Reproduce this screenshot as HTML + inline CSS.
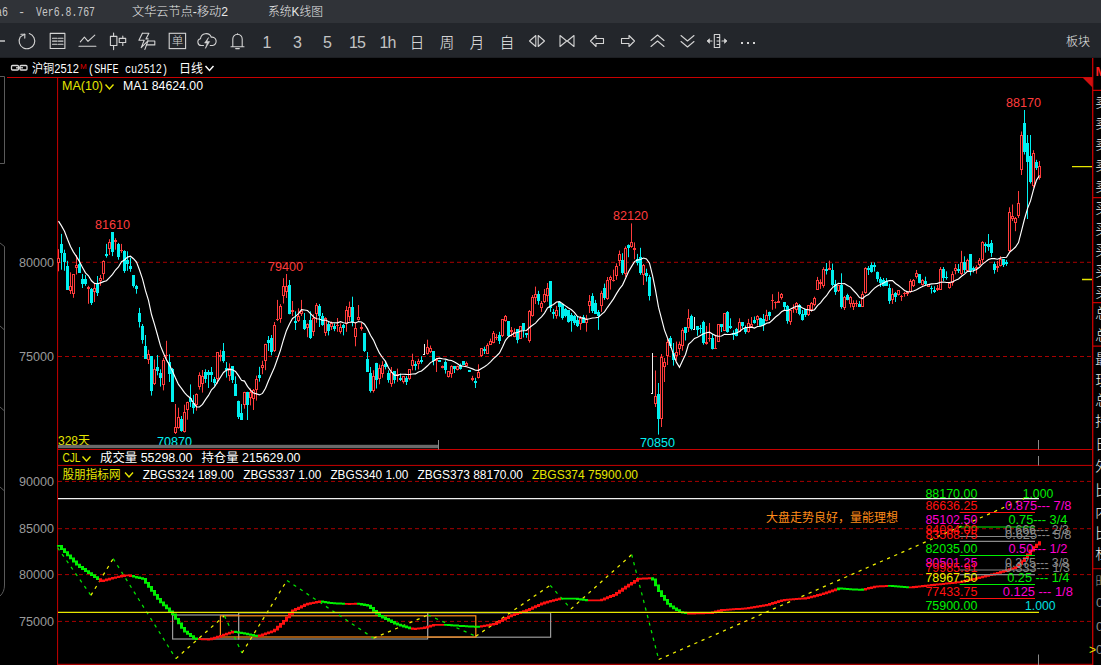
<!DOCTYPE html>
<html lang="zh"><head><meta charset="utf-8"><title>系统K线图</title>
<style>html,body{margin:0;padding:0;background:#000;overflow:hidden}body{width:1101px;height:665px}svg text{white-space:pre}</style></head>
<body><svg width="1101" height="665" viewBox="0 0 1101 665" font-family="Liberation Sans, Noto Sans CJK SC, sans-serif" style="display:block"><rect x="0" y="0" width="1101" height="665" fill="#000"/>
<rect x="0" y="0" width="1101" height="23" fill="#303338"/>
<rect x="0" y="23" width="1101" height="34.8" fill="#23262b"/>
<text x="-4" y="15.5" fill="#c8c8c8" font-size="12" text-anchor="start" textLength="12" lengthAdjust="spacingAndGlyphs" font-family="Liberation Mono, Noto Sans CJK SC, monospace">a6</text>
<text x="18" y="15.5" fill="#c8c8c8" font-size="12" text-anchor="start" font-family="Liberation Mono, Noto Sans CJK SC, monospace">-</text>
<text x="36" y="15.5" fill="#c8c8c8" font-size="12" text-anchor="start" textLength="59" lengthAdjust="spacingAndGlyphs" font-family="Liberation Mono, Noto Sans CJK SC, monospace">Ver6.8.767</text>
<text x="132" y="15.5" fill="#e8e8e8" font-size="12" text-anchor="start" textLength="96" lengthAdjust="spacingAndGlyphs" font-weight="300">文华云节点-移动2</text>
<text x="268" y="15.5" fill="#e8e8e8" font-size="12" text-anchor="start" textLength="55" lengthAdjust="spacingAndGlyphs" font-weight="300">系统K线图</text>
<text x="1066" y="45.8" fill="#e8e8e8" font-size="12" text-anchor="start" textLength="24" lengthAdjust="spacingAndGlyphs" font-weight="300">板块</text>
<path d="M0 41H5" stroke="#d4d4d4" stroke-width="1.4"/>
<g transform="translate(26.9,41)" fill="none" stroke="#d4d4d4" stroke-width="1.1" stroke-linecap="round" stroke-linejoin="round"><path d="M2.4 -7.45A7.8 7.8 0 1 1 -6.6 -4.1L-2.1 -6.8"/><path d="M-6 -6.8H-2.1V-2.9"/></g>
<g transform="translate(57.5,41)" fill="none" stroke="#d4d4d4" stroke-width="1.1" stroke-linecap="round" stroke-linejoin="round"><rect x="-7.3" y="-7.6" width="14.7" height="15.1"/><path d="M-5 -2.8H-0.4M0.9 -2.8H5.5M-5 0.1H-0.4M0.9 0.1H5.5M-5 3.3H-0.4M0.9 3.3H5.5" stroke-width="1.1"/></g>
<g transform="translate(87.5,41)" fill="none" stroke="#d4d4d4" stroke-width="1.1" stroke-linecap="round" stroke-linejoin="round"><path d="M-7.2 0.9L-3.1 -3.8L0.5 0.3L7.3 -5.8"/><path d="M-8.5 5.3H8.4"/></g>
<g transform="translate(118,41)" fill="none" stroke="#d4d4d4" stroke-width="1.1" stroke-linecap="round" stroke-linejoin="round"><rect x="-7.6" y="-4.6" width="6.5" height="9.1"/><path d="M-4.4 -8V-4.6M-4.4 4.5V8.6"/><rect x="1.2" y="-2.6" width="6.5" height="4.1"/><path d="M4.8 -5V-2.6M4.8 1.5V4.5"/></g>
<g transform="translate(147.5,41)" fill="none" stroke="#d4d4d4" stroke-width="1.1" stroke-linecap="round" stroke-linejoin="round"><path d="M-5.1 -7.7H1.4L-1.6 -2.1H0.6"/><path d="M-5.1 -7.7L-8.6 -0.7H-3.3L-6.3 6.6L0.4 -0.2"/><path d="M0.4 0H7.3V3.9H-1"/><path d="M0.4 0L-2.6 8.4"/></g>
<rect x="169.2" y="33.3" width="16.4" height="15.3" fill="none" stroke="#d4d4d4" stroke-width="1.1"/>
<text x="177.4" y="45.3" fill="#d4d4d4" font-size="11.5" text-anchor="middle" font-weight="300">单</text>
<g transform="translate(207,41)" fill="none" stroke="#d4d4d4" stroke-width="1.1" stroke-linecap="round" stroke-linejoin="round"><path d="M-3.5 4.5H-5.5A3.4 3.4 0 0 1 -6.5 -2.2A5.6 5.6 0 0 1 4.3 -3.8A4.2 4.2 0 0 1 5.6 4.5H3.2"/><path d="M1.4 -3.2L-2.4 2H0.2L-1.6 7.4L2.6 0.6H0Z" fill="#d4d4d4" stroke-width="0.6"/></g>
<g transform="translate(237.5,41)" fill="none" stroke="#d4d4d4" stroke-width="1.1" stroke-linecap="round" stroke-linejoin="round"><path d="M-6.5 5.7H6.5M-4.7 5.7V-2A4.7 4.7 0 0 1 4.7 -2V5.7"/><path d="M-1.8 7.6H1.8"/><path d="M0 -6.7V-7.3"/></g>
<text x="266.5" y="48" fill="#c4c4c4" font-size="16" text-anchor="middle" style="letter-spacing:-0.8px">1</text>
<text x="297" y="48" fill="#c4c4c4" font-size="16" text-anchor="middle" style="letter-spacing:-0.8px">3</text>
<text x="327" y="48" fill="#c4c4c4" font-size="16" text-anchor="middle" style="letter-spacing:-0.8px">5</text>
<text x="357" y="48" fill="#c4c4c4" font-size="16" text-anchor="middle" style="letter-spacing:-0.8px">15</text>
<text x="387.5" y="48" fill="#c4c4c4" font-size="16" text-anchor="middle" style="letter-spacing:-0.8px">1h</text>
<text x="417" y="48" fill="#f2f2f2" font-size="14.5" text-anchor="middle" font-weight="300">日</text>
<text x="447" y="48" fill="#f2f2f2" font-size="14.5" text-anchor="middle" font-weight="300">周</text>
<text x="477" y="48" fill="#f2f2f2" font-size="14.5" text-anchor="middle" font-weight="300">月</text>
<text x="507" y="48" fill="#f2f2f2" font-size="14.5" text-anchor="middle" font-weight="300">自</text>
<g transform="translate(537,41)" fill="none" stroke="#d4d4d4" stroke-width="1.1" stroke-linecap="round" stroke-linejoin="round"><path d="M-1.2 -5.5L-7.5 0L-1.2 5.5Z"/><path d="M1.2 -5.5L7.5 0L1.2 5.5Z"/></g>
<g transform="translate(567,41)" fill="none" stroke="#d4d4d4" stroke-width="1.1" stroke-linecap="round" stroke-linejoin="round"><path d="M-7 -5.5L-0.3 0L-7 5.5Z"/><path d="M7 -5.5L0.3 0L7 5.5Z"/></g>
<g transform="translate(597.5,41)" fill="none" stroke="#d4d4d4" stroke-width="1.1" stroke-linecap="round" stroke-linejoin="round"><path d="M-7 0L-1.5 -5.5V-2.5H6V2.5H-1.5V5.5Z"/></g>
<g transform="translate(627.5,41)" fill="none" stroke="#d4d4d4" stroke-width="1.1" stroke-linecap="round" stroke-linejoin="round"><path d="M7 0L1.5 -5.5V-2.5H-6V2.5H1.5V5.5Z"/></g>
<g transform="translate(657.5,41)" fill="none" stroke="#d4d4d4" stroke-width="1.1" stroke-linecap="round" stroke-linejoin="round"><path d="M-6.5 -0.5L0 -6L6.5 -0.5M-6.5 5.5L0 0L6.5 5.5"/></g>
<g transform="translate(687.5,41)" fill="none" stroke="#d4d4d4" stroke-width="1.1" stroke-linecap="round" stroke-linejoin="round"><path d="M-6.5 -5.5L0 0L6.5 -5.5M-6.5 0.5L0 6L6.5 0.5"/></g>
<g transform="translate(717,41)" fill="none" stroke="#d4d4d4" stroke-width="1.1" stroke-linecap="round" stroke-linejoin="round"><rect x="-2.7" y="-6.5" width="5.4" height="13"/><path d="M0 -3.5H2.7M0 0H2.7M0 3.5H2.7" stroke-width="1"/><path d="M-9.5 0H-5M5 0H9.5"/><path d="M-7.8 -2L-9.8 0L-7.8 2ZM7.8 -2L9.8 0L7.8 2Z" fill="#d4d4d4" stroke-width="0.8"/></g>
<g fill="#d4d4d4"><rect x="741" y="42" width="2" height="2"/><rect x="747" y="42" width="2" height="2"/><rect x="753" y="42" width="2" height="2"/></g>
<path d="M0 76.5H4.5V163.5H0" fill="none" stroke="#5a5a5a" stroke-width="1"/>
<path d="M0 243L4.5 246.5V585Q4.5 592 0 596" fill="none" stroke="#5a5a5a" stroke-width="1"/>
<path d="M0 326L4.5 330M0 407L4.5 411M0 487L4.5 491" fill="none" stroke="#5a5a5a" stroke-width="1"/>
<g fill="none" stroke="#d8d8d8" stroke-width="1.3"><rect x="11.5" y="65.5" width="7" height="4.5" rx="1"/><rect x="20" y="65.5" width="7" height="4.5" rx="1"/><path d="M16 67.8H23"/></g>
<text x="32" y="73" fill="#fff" font-size="12" text-anchor="start" textLength="47" lengthAdjust="spacingAndGlyphs" >沪铜2512</text>
<text x="80" y="68.5" fill="#e00000" font-size="8" text-anchor="start" >M</text>
<text x="88" y="73" fill="#fff" font-size="12" text-anchor="start" textLength="80" lengthAdjust="spacingAndGlyphs" font-family="Liberation Mono, monospace">(SHFE cu2512)</text>
<text x="179" y="73" fill="#fff" font-size="12" text-anchor="start" textLength="24" lengthAdjust="spacingAndGlyphs" >日线</text>
<path d="M205.5 66L209.5 70.5L213.5 66" fill="none" stroke="#fff" stroke-width="1.4"/>
<path d="M7 77.5H1092.5" stroke="#c80000" stroke-width="1"/>
<path d="M57.6 77V665" stroke="#c80000" stroke-width="1"/>
<path d="M1092.7 58V665" stroke="#c80000" stroke-width="1.3"/>
<path d="M1082.5 77.5H1092.5V87.5Z" fill="#d01010"/>
<path d="M58 449.5H1092M58 465.4H1092M58 664.3H1092" stroke="#c80000" stroke-width="1"/>
<path d="M58 262.3H1092" stroke="#a80000" stroke-width="1" stroke-dasharray="4 3"/>
<path d="M58 356.5H1092" stroke="#a80000" stroke-width="1" stroke-dasharray="4 3"/>
<path d="M58 481.4H1092" stroke="#a80000" stroke-width="1" stroke-dasharray="4 3"/>
<path d="M58 528.7H1092" stroke="#a80000" stroke-width="1" stroke-dasharray="4 3"/>
<path d="M58 574.6H1092" stroke="#a80000" stroke-width="1" stroke-dasharray="4 3"/>
<path d="M58 621.4H1092" stroke="#a80000" stroke-width="1" stroke-dasharray="4 3"/>
<text x="54" y="266.6" fill="#9a9a9a" font-size="12" text-anchor="end" textLength="35" lengthAdjust="spacingAndGlyphs" >80000</text>
<text x="54" y="360.8" fill="#9a9a9a" font-size="12" text-anchor="end" textLength="35" lengthAdjust="spacingAndGlyphs" >75000</text>
<text x="54" y="485.7" fill="#9a9a9a" font-size="12" text-anchor="end" textLength="35" lengthAdjust="spacingAndGlyphs" >90000</text>
<text x="54" y="533.0" fill="#9a9a9a" font-size="12" text-anchor="end" textLength="35" lengthAdjust="spacingAndGlyphs" >85000</text>
<text x="54" y="578.9" fill="#9a9a9a" font-size="12" text-anchor="end" textLength="35" lengthAdjust="spacingAndGlyphs" >80000</text>
<text x="54" y="625.6999999999999" fill="#9a9a9a" font-size="12" text-anchor="end" textLength="35" lengthAdjust="spacingAndGlyphs" >75000</text>
<text x="62" y="90" fill="#e6e600" font-size="12" text-anchor="start" textLength="41" lengthAdjust="spacingAndGlyphs" >MA(10)</text>
<path d="M105.5 84.5L109.5 89L113.5 84.5" fill="none" stroke="#e6e600" stroke-width="1.4"/>
<text x="123" y="90" fill="#fff" font-size="12" text-anchor="start" textLength="80" lengthAdjust="spacingAndGlyphs" >MA1 84624.00</text>
<path d="M58.5 249.2V258.0M58.5 263.0V271.3" stroke="#ff3c3c" stroke-width="1"/>
<rect x="57.0" y="258.0" width="3" height="5.0" fill="#ff3c3c"/>
<rect x="58.0" y="259.0" width="1" height="3.0" fill="#000"/>
<path d="M61.5 233.9V269.7" stroke="#00f0f0" stroke-width="1"/>
<rect x="60.0" y="244.0" width="3" height="9.0" fill="#00f0f0"/>
<path d="M64.5 249.7V270.8" stroke="#00f0f0" stroke-width="1"/>
<rect x="63.0" y="253.0" width="3" height="9.0" fill="#00f0f0"/>
<path d="M67.5 260.8V290.0" stroke="#00f0f0" stroke-width="1"/>
<rect x="66.0" y="266.0" width="3" height="24.0" fill="#00f0f0"/>
<path d="M70.5 272.3V286.0M70.5 291.0V294.0" stroke="#ff3c3c" stroke-width="1"/>
<rect x="69.0" y="286.0" width="3" height="5.0" fill="#ff3c3c"/>
<rect x="70.0" y="287.0" width="1" height="3.0" fill="#000"/>
<path d="M73.5 274.0V274.0M73.5 294.0V297.8" stroke="#ff3c3c" stroke-width="1"/>
<rect x="72.0" y="274.0" width="3" height="20.0" fill="#ff3c3c"/>
<rect x="73.0" y="275.0" width="1" height="18.0" fill="#000"/>
<path d="M76.5 255.0V265.0M76.5 268.0V274.5" stroke="#ff3c3c" stroke-width="1"/>
<rect x="75.0" y="265.0" width="3" height="3.0" fill="#ff3c3c"/>
<rect x="76.0" y="266.0" width="1" height="1.0" fill="#000"/>
<path d="M79.5 247.1V273.0" stroke="#00f0f0" stroke-width="1"/>
<rect x="78.0" y="264.0" width="3" height="9.0" fill="#00f0f0"/>
<path d="M82.5 274.0V288.0" stroke="#00f0f0" stroke-width="1"/>
<rect x="81.0" y="279.0" width="3" height="5.0" fill="#00f0f0"/>
<path d="M85.5 274.9V285.8" stroke="#00f0f0" stroke-width="1"/>
<rect x="84.0" y="279.0" width="3" height="5.0" fill="#00f0f0"/>
<path d="M88.5 285.8V287.0M88.5 289.0V303.8" stroke="#ff3c3c" stroke-width="1"/>
<rect x="87.0" y="287.0" width="3" height="2.0" fill="#ff3c3c"/>
<path d="M91.5 288.0V305.0" stroke="#00f0f0" stroke-width="1"/>
<rect x="90.0" y="289.0" width="3" height="14.0" fill="#00f0f0"/>
<path d="M94.5 283.9V288.0M94.5 292.0V302.0" stroke="#ff3c3c" stroke-width="1"/>
<rect x="93.0" y="288.0" width="3" height="4.0" fill="#ff3c3c"/>
<rect x="94.0" y="289.0" width="1" height="2.0" fill="#000"/>
<path d="M97.5 276.0V296.0" stroke="#00f0f0" stroke-width="1"/>
<rect x="96.0" y="284.0" width="3" height="9.0" fill="#00f0f0"/>
<path d="M100.5 274.9V278.0M100.5 281.0V285.8" stroke="#ff3c3c" stroke-width="1"/>
<rect x="99.0" y="278.0" width="3" height="3.0" fill="#ff3c3c"/>
<rect x="100.0" y="279.0" width="1" height="1.0" fill="#000"/>
<path d="M103.5 260.3V261.0M103.5 274.0V279.7" stroke="#ff3c3c" stroke-width="1"/>
<rect x="102.0" y="261.0" width="3" height="13.0" fill="#ff3c3c"/>
<rect x="103.0" y="262.0" width="1" height="11.0" fill="#000"/>
<path d="M106.5 243.9V257.6" stroke="#00f0f0" stroke-width="1"/>
<rect x="105.0" y="254.0" width="3" height="2.0" fill="#00f0f0"/>
<path d="M109.5 239.2V242.0M109.5 249.0V255.0" stroke="#ff3c3c" stroke-width="1"/>
<rect x="108.0" y="242.0" width="3" height="7.0" fill="#ff3c3c"/>
<rect x="109.0" y="243.0" width="1" height="5.0" fill="#000"/>
<path d="M112.5 232.0V256.1" stroke="#00f0f0" stroke-width="1"/>
<rect x="111.0" y="232.0" width="3" height="20.0" fill="#00f0f0"/>
<path d="M115.5 238.2V240.0M115.5 242.0V249.7" stroke="#ff3c3c" stroke-width="1"/>
<rect x="114.0" y="240.0" width="3" height="2.0" fill="#ff3c3c"/>
<path d="M118.5 242.9V259.7" stroke="#00f0f0" stroke-width="1"/>
<rect x="117.0" y="244.0" width="3" height="13.0" fill="#00f0f0"/>
<path d="M121.5 243.9V250.0M121.5 251.0V252.9" stroke="#ff3c3c" stroke-width="1"/>
<rect x="120.0" y="250.0" width="3" height="1.0" fill="#ff3c3c"/>
<path d="M124.5 250.3V272.9" stroke="#00f0f0" stroke-width="1"/>
<rect x="123.0" y="251.0" width="3" height="20.0" fill="#00f0f0"/>
<path d="M127.5 251.3V270.8" stroke="#00f0f0" stroke-width="1"/>
<rect x="126.0" y="260.0" width="3" height="4.0" fill="#00f0f0"/>
<path d="M130.5 257.6V271.8" stroke="#00f0f0" stroke-width="1"/>
<rect x="129.0" y="266.0" width="3" height="3.0" fill="#00f0f0"/>
<path d="M133.5 275.0V287.6" stroke="#00f0f0" stroke-width="1"/>
<rect x="132.0" y="275.0" width="3" height="11.0" fill="#00f0f0"/>
<path d="M136.5 284.9V293.7" stroke="#00f0f0" stroke-width="1"/>
<rect x="135.0" y="286.0" width="3" height="3.0" fill="#00f0f0"/>
<path d="M139.5 307.9V327.5" stroke="#00f0f0" stroke-width="1"/>
<rect x="138.0" y="313.0" width="3" height="9.0" fill="#00f0f0"/>
<path d="M142.5 324.0V343.7" stroke="#00f0f0" stroke-width="1"/>
<rect x="141.0" y="326.0" width="3" height="14.0" fill="#00f0f0"/>
<path d="M145.5 335.0V359.0" stroke="#00f0f0" stroke-width="1"/>
<rect x="144.0" y="346.0" width="3" height="13.0" fill="#00f0f0"/>
<path d="M148.5 349.8V354.0M148.5 360.0V364.0" stroke="#ff3c3c" stroke-width="1"/>
<rect x="147.0" y="354.0" width="3" height="6.0" fill="#ff3c3c"/>
<rect x="148.0" y="355.0" width="1" height="4.0" fill="#000"/>
<path d="M151.5 356.0V395.6" stroke="#00f0f0" stroke-width="1"/>
<rect x="150.0" y="356.0" width="3" height="35.0" fill="#00f0f0"/>
<path d="M154.5 359.5V369.0M154.5 384.0V385.0" stroke="#ff3c3c" stroke-width="1"/>
<rect x="153.0" y="369.0" width="3" height="15.0" fill="#ff3c3c"/>
<rect x="154.0" y="370.0" width="1" height="13.0" fill="#000"/>
<path d="M157.5 355.0V375.3" stroke="#00f0f0" stroke-width="1"/>
<rect x="156.0" y="367.0" width="3" height="4.0" fill="#00f0f0"/>
<path d="M160.5 369.3V386.6" stroke="#00f0f0" stroke-width="1"/>
<rect x="159.0" y="373.0" width="3" height="5.0" fill="#00f0f0"/>
<path d="M163.5 358.0V360.0M163.5 385.0V390.4" stroke="#ff3c3c" stroke-width="1"/>
<rect x="162.0" y="360.0" width="3" height="25.0" fill="#ff3c3c"/>
<rect x="163.0" y="361.0" width="1" height="23.0" fill="#000"/>
<path d="M166.5 340.8V355.0M166.5 356.0V358.8" stroke="#ff3c3c" stroke-width="1"/>
<rect x="165.0" y="355.0" width="3" height="1.0" fill="#ff3c3c"/>
<path d="M169.5 354.3V382.0" stroke="#00f0f0" stroke-width="1"/>
<rect x="168.0" y="362.0" width="3" height="12.0" fill="#00f0f0"/>
<path d="M172.5 368.0V402.0" stroke="#00f0f0" stroke-width="1"/>
<rect x="171.0" y="369.0" width="3" height="33.0" fill="#00f0f0"/>
<path d="M175.5 404.0V427.0M175.5 433.0V434.0" stroke="#ff3c3c" stroke-width="1"/>
<rect x="174.0" y="427.0" width="3" height="6.0" fill="#ff3c3c"/>
<rect x="175.0" y="428.0" width="1" height="4.0" fill="#000"/>
<path d="M178.5 407.7V417.0M178.5 428.0V428.7" stroke="#ff3c3c" stroke-width="1"/>
<rect x="177.0" y="417.0" width="3" height="11.0" fill="#ff3c3c"/>
<rect x="178.0" y="418.0" width="1" height="9.0" fill="#000"/>
<path d="M181.5 416.0V431.7" stroke="#00f0f0" stroke-width="1"/>
<rect x="180.0" y="419.0" width="3" height="12.0" fill="#00f0f0"/>
<path d="M184.5 404.7V412.0M184.5 432.0V432.5" stroke="#ff3c3c" stroke-width="1"/>
<rect x="183.0" y="412.0" width="3" height="20.0" fill="#ff3c3c"/>
<rect x="184.0" y="413.0" width="1" height="18.0" fill="#000"/>
<path d="M187.5 401.7V402.0M187.5 410.0V419.7" stroke="#ff3c3c" stroke-width="1"/>
<rect x="186.0" y="402.0" width="3" height="8.0" fill="#ff3c3c"/>
<rect x="187.0" y="403.0" width="1" height="6.0" fill="#000"/>
<path d="M190.5 384.4V407.0" stroke="#00f0f0" stroke-width="1"/>
<rect x="189.0" y="398.0" width="3" height="4.0" fill="#00f0f0"/>
<path d="M193.5 394.9V413.7" stroke="#00f0f0" stroke-width="1"/>
<rect x="192.0" y="403.0" width="3" height="5.0" fill="#00f0f0"/>
<path d="M196.5 393.4V394.0M196.5 405.0V410.7" stroke="#ff3c3c" stroke-width="1"/>
<rect x="195.0" y="394.0" width="3" height="11.0" fill="#ff3c3c"/>
<rect x="196.0" y="395.0" width="1" height="9.0" fill="#000"/>
<path d="M199.5 372.3V375.0M199.5 387.0V389.6" stroke="#ff3c3c" stroke-width="1"/>
<rect x="198.0" y="375.0" width="3" height="12.0" fill="#ff3c3c"/>
<rect x="199.0" y="376.0" width="1" height="10.0" fill="#000"/>
<path d="M202.5 370.0V376.0M202.5 384.0V392.6" stroke="#ff3c3c" stroke-width="1"/>
<rect x="201.0" y="376.0" width="3" height="8.0" fill="#ff3c3c"/>
<rect x="202.0" y="377.0" width="1" height="6.0" fill="#000"/>
<path d="M205.5 369.3V382.9" stroke="#00f0f0" stroke-width="1"/>
<rect x="204.0" y="372.0" width="3" height="7.0" fill="#00f0f0"/>
<path d="M208.5 370.0V388.0" stroke="#00f0f0" stroke-width="1"/>
<rect x="207.0" y="372.0" width="3" height="3.0" fill="#00f0f0"/>
<path d="M211.5 367.0V382.0" stroke="#00f0f0" stroke-width="1"/>
<rect x="210.0" y="372.0" width="3" height="3.0" fill="#00f0f0"/>
<path d="M214.5 377.0V385.7" stroke="#00f0f0" stroke-width="1"/>
<rect x="213.0" y="379.0" width="3" height="4.0" fill="#00f0f0"/>
<path d="M217.5 352.0V352.0M217.5 379.0V383.7" stroke="#ff3c3c" stroke-width="1"/>
<rect x="216.0" y="352.0" width="3" height="27.0" fill="#ff3c3c"/>
<rect x="217.0" y="353.0" width="1" height="25.0" fill="#000"/>
<path d="M220.5 349.9V355.0M220.5 357.0V361.4" stroke="#ff3c3c" stroke-width="1"/>
<rect x="219.0" y="355.0" width="3" height="2.0" fill="#ff3c3c"/>
<path d="M223.5 343.0V362.7" stroke="#00f0f0" stroke-width="1"/>
<rect x="222.0" y="351.0" width="3" height="10.0" fill="#00f0f0"/>
<path d="M226.5 362.0V377.6" stroke="#00f0f0" stroke-width="1"/>
<rect x="225.0" y="368.0" width="3" height="2.0" fill="#00f0f0"/>
<path d="M229.5 363.4V368.0M229.5 376.0V381.0" stroke="#ff3c3c" stroke-width="1"/>
<rect x="228.0" y="368.0" width="3" height="8.0" fill="#ff3c3c"/>
<rect x="229.0" y="369.0" width="1" height="6.0" fill="#000"/>
<path d="M232.5 366.0V383.0" stroke="#00f0f0" stroke-width="1"/>
<rect x="231.0" y="366.0" width="3" height="14.0" fill="#00f0f0"/>
<path d="M235.5 376.3V396.0" stroke="#00f0f0" stroke-width="1"/>
<rect x="234.0" y="384.0" width="3" height="12.0" fill="#00f0f0"/>
<path d="M238.5 400.6V419.0" stroke="#00f0f0" stroke-width="1"/>
<rect x="237.0" y="401.0" width="3" height="16.0" fill="#00f0f0"/>
<path d="M241.5 404.0V420.0" stroke="#00f0f0" stroke-width="1"/>
<rect x="240.0" y="413.0" width="3" height="7.0" fill="#00f0f0"/>
<path d="M244.5 391.8V392.0M244.5 405.0V408.7" stroke="#ff3c3c" stroke-width="1"/>
<rect x="243.0" y="392.0" width="3" height="13.0" fill="#ff3c3c"/>
<rect x="244.0" y="393.0" width="1" height="11.0" fill="#000"/>
<path d="M247.5 391.8V420.0" stroke="#00f0f0" stroke-width="1"/>
<rect x="246.0" y="392.0" width="3" height="13.0" fill="#00f0f0"/>
<path d="M250.5 388.5V392.0M250.5 398.0V405.4" stroke="#ff3c3c" stroke-width="1"/>
<rect x="249.0" y="392.0" width="3" height="6.0" fill="#ff3c3c"/>
<rect x="250.0" y="393.0" width="1" height="4.0" fill="#000"/>
<path d="M253.5 389.0V390.0M253.5 399.0V410.0" stroke="#ff3c3c" stroke-width="1"/>
<rect x="252.0" y="390.0" width="3" height="9.0" fill="#ff3c3c"/>
<rect x="253.0" y="391.0" width="1" height="7.0" fill="#000"/>
<path d="M256.5 375.6V379.0M256.5 390.0V400.6" stroke="#ff3c3c" stroke-width="1"/>
<rect x="255.0" y="379.0" width="3" height="11.0" fill="#ff3c3c"/>
<rect x="256.0" y="380.0" width="1" height="9.0" fill="#000"/>
<path d="M259.5 366.8V381.7" stroke="#00f0f0" stroke-width="1"/>
<rect x="258.0" y="375.0" width="3" height="3.0" fill="#00f0f0"/>
<path d="M262.5 360.7V365.0M262.5 368.0V374.2" stroke="#ff3c3c" stroke-width="1"/>
<rect x="261.0" y="365.0" width="3" height="3.0" fill="#ff3c3c"/>
<rect x="262.0" y="366.0" width="1" height="1.0" fill="#000"/>
<path d="M265.5 343.8V344.0M265.5 361.0V370.2" stroke="#ff3c3c" stroke-width="1"/>
<rect x="264.0" y="344.0" width="3" height="17.0" fill="#ff3c3c"/>
<rect x="265.0" y="345.0" width="1" height="15.0" fill="#000"/>
<path d="M268.5 336.0V351.0" stroke="#00f0f0" stroke-width="1"/>
<rect x="267.0" y="340.0" width="3" height="3.0" fill="#00f0f0"/>
<path d="M271.5 335.0V355.3" stroke="#00f0f0" stroke-width="1"/>
<rect x="270.0" y="338.0" width="3" height="14.0" fill="#00f0f0"/>
<path d="M274.5 322.0V325.0M274.5 351.0V352.0" stroke="#ff3c3c" stroke-width="1"/>
<rect x="273.0" y="325.0" width="3" height="26.0" fill="#ff3c3c"/>
<rect x="274.0" y="326.0" width="1" height="24.0" fill="#000"/>
<path d="M277.5 299.9V319.0M277.5 320.0V321.0" stroke="#ff3c3c" stroke-width="1"/>
<rect x="276.0" y="319.0" width="3" height="1.0" fill="#ff3c3c"/>
<path d="M280.5 304.1V306.0M280.5 319.0V322.8" stroke="#ff3c3c" stroke-width="1"/>
<rect x="279.0" y="306.0" width="3" height="13.0" fill="#ff3c3c"/>
<rect x="280.0" y="307.0" width="1" height="11.0" fill="#000"/>
<path d="M283.5 278.2V286.0M283.5 296.0V303.5" stroke="#ff3c3c" stroke-width="1"/>
<rect x="282.0" y="286.0" width="3" height="10.0" fill="#ff3c3c"/>
<rect x="283.0" y="287.0" width="1" height="8.0" fill="#000"/>
<path d="M286.5 274.0V286.0M286.5 292.0V298.0" stroke="#ff3c3c" stroke-width="1"/>
<rect x="285.0" y="286.0" width="3" height="6.0" fill="#ff3c3c"/>
<rect x="286.0" y="287.0" width="1" height="4.0" fill="#000"/>
<path d="M289.5 280.0V314.3" stroke="#00f0f0" stroke-width="1"/>
<rect x="288.0" y="285.0" width="3" height="29.0" fill="#00f0f0"/>
<path d="M292.5 301.0V310.0M292.5 312.0V316.0" stroke="#ff3c3c" stroke-width="1"/>
<rect x="291.0" y="310.0" width="3" height="2.0" fill="#ff3c3c"/>
<path d="M295.5 311.3V330.0" stroke="#00f0f0" stroke-width="1"/>
<rect x="294.0" y="321.0" width="3" height="2.0" fill="#00f0f0"/>
<path d="M298.5 308.3V316.0M298.5 321.0V322.0" stroke="#ff3c3c" stroke-width="1"/>
<rect x="297.0" y="316.0" width="3" height="5.0" fill="#ff3c3c"/>
<rect x="298.0" y="317.0" width="1" height="3.0" fill="#000"/>
<path d="M301.5 299.9V311.0M301.5 314.0V316.0" stroke="#ff3c3c" stroke-width="1"/>
<rect x="300.0" y="311.0" width="3" height="3.0" fill="#ff3c3c"/>
<rect x="301.0" y="312.0" width="1" height="1.0" fill="#000"/>
<path d="M304.5 313.0V330.0" stroke="#00f0f0" stroke-width="1"/>
<rect x="303.0" y="320.0" width="3" height="9.0" fill="#00f0f0"/>
<path d="M307.5 323.4V324.0M307.5 328.0V337.2" stroke="#ff3c3c" stroke-width="1"/>
<rect x="306.0" y="324.0" width="3" height="4.0" fill="#ff3c3c"/>
<rect x="307.0" y="325.0" width="1" height="2.0" fill="#000"/>
<path d="M310.5 311.3V339.0" stroke="#00f0f0" stroke-width="1"/>
<rect x="309.0" y="320.0" width="3" height="18.0" fill="#00f0f0"/>
<path d="M313.5 314.3V318.0M313.5 332.0V336.0" stroke="#ff3c3c" stroke-width="1"/>
<rect x="312.0" y="318.0" width="3" height="14.0" fill="#ff3c3c"/>
<rect x="313.0" y="319.0" width="1" height="12.0" fill="#000"/>
<path d="M316.5 303.0V305.0M316.5 314.0V322.8" stroke="#ff3c3c" stroke-width="1"/>
<rect x="315.0" y="305.0" width="3" height="9.0" fill="#ff3c3c"/>
<rect x="316.0" y="306.0" width="1" height="7.0" fill="#000"/>
<path d="M319.5 304.0V327.0" stroke="#00f0f0" stroke-width="1"/>
<rect x="318.0" y="306.0" width="3" height="10.0" fill="#00f0f0"/>
<path d="M322.5 313.0V325.8" stroke="#00f0f0" stroke-width="1"/>
<rect x="321.0" y="316.0" width="3" height="9.0" fill="#00f0f0"/>
<path d="M325.5 317.3V318.0M325.5 333.0V336.0" stroke="#ff3c3c" stroke-width="1"/>
<rect x="324.0" y="318.0" width="3" height="15.0" fill="#ff3c3c"/>
<rect x="325.0" y="319.0" width="1" height="13.0" fill="#000"/>
<path d="M328.5 321.5V335.4" stroke="#00f0f0" stroke-width="1"/>
<rect x="327.0" y="324.0" width="3" height="7.0" fill="#00f0f0"/>
<path d="M331.5 321.5V323.0M331.5 327.0V330.0" stroke="#ff3c3c" stroke-width="1"/>
<rect x="330.0" y="323.0" width="3" height="4.0" fill="#ff3c3c"/>
<rect x="331.0" y="324.0" width="1" height="2.0" fill="#000"/>
<path d="M334.5 323.4V331.2" stroke="#00f0f0" stroke-width="1"/>
<rect x="333.0" y="326.0" width="3" height="3.0" fill="#00f0f0"/>
<path d="M337.5 318.0V325.0M337.5 326.0V331.8" stroke="#ff3c3c" stroke-width="1"/>
<rect x="336.0" y="325.0" width="3" height="1.0" fill="#ff3c3c"/>
<path d="M340.5 323.4V327.0M340.5 332.0V333.6" stroke="#ff3c3c" stroke-width="1"/>
<rect x="339.0" y="327.0" width="3" height="5.0" fill="#ff3c3c"/>
<rect x="340.0" y="328.0" width="1" height="3.0" fill="#000"/>
<path d="M343.5 324.0V335.4" stroke="#00f0f0" stroke-width="1"/>
<rect x="342.0" y="325.0" width="3" height="3.0" fill="#00f0f0"/>
<path d="M346.5 306.0V310.0M346.5 324.0V331.8" stroke="#ff3c3c" stroke-width="1"/>
<rect x="345.0" y="310.0" width="3" height="14.0" fill="#ff3c3c"/>
<rect x="346.0" y="311.0" width="1" height="12.0" fill="#000"/>
<path d="M349.5 301.6V307.0M349.5 317.0V321.0" stroke="#ff3c3c" stroke-width="1"/>
<rect x="348.0" y="307.0" width="3" height="10.0" fill="#ff3c3c"/>
<rect x="349.0" y="308.0" width="1" height="8.0" fill="#000"/>
<path d="M352.5 296.7V326.4" stroke="#00f0f0" stroke-width="1"/>
<rect x="351.0" y="307.0" width="3" height="15.0" fill="#00f0f0"/>
<path d="M355.5 322.3V328.0M355.5 337.0V346.3" stroke="#ff3c3c" stroke-width="1"/>
<rect x="354.0" y="328.0" width="3" height="9.0" fill="#ff3c3c"/>
<rect x="355.0" y="329.0" width="1" height="7.0" fill="#000"/>
<path d="M358.5 305.0V317.0M358.5 320.0V320.6" stroke="#ff3c3c" stroke-width="1"/>
<rect x="357.0" y="317.0" width="3" height="3.0" fill="#ff3c3c"/>
<rect x="358.0" y="318.0" width="1" height="1.0" fill="#000"/>
<path d="M361.5 323.0V327.0M361.5 329.0V330.6" stroke="#ff3c3c" stroke-width="1"/>
<rect x="360.0" y="327.0" width="3" height="2.0" fill="#ff3c3c"/>
<path d="M364.5 333.0V352.0" stroke="#00f0f0" stroke-width="1"/>
<rect x="363.0" y="333.0" width="3" height="18.0" fill="#00f0f0"/>
<path d="M367.5 352.0V372.0" stroke="#00f0f0" stroke-width="1"/>
<rect x="366.0" y="359.0" width="3" height="13.0" fill="#00f0f0"/>
<path d="M370.5 367.0V392.6" stroke="#00f0f0" stroke-width="1"/>
<rect x="369.0" y="373.0" width="3" height="18.0" fill="#00f0f0"/>
<path d="M373.5 370.3V376.0M373.5 391.0V392.6" stroke="#ff3c3c" stroke-width="1"/>
<rect x="372.0" y="376.0" width="3" height="15.0" fill="#ff3c3c"/>
<rect x="373.0" y="377.0" width="1" height="13.0" fill="#000"/>
<path d="M376.5 362.8V388.5" stroke="#00f0f0" stroke-width="1"/>
<rect x="375.0" y="363.0" width="3" height="17.0" fill="#00f0f0"/>
<path d="M379.5 364.5V368.0M379.5 379.0V384.3" stroke="#ff3c3c" stroke-width="1"/>
<rect x="378.0" y="368.0" width="3" height="11.0" fill="#ff3c3c"/>
<rect x="379.0" y="369.0" width="1" height="9.0" fill="#000"/>
<path d="M382.5 361.2V365.0M382.5 374.0V377.7" stroke="#ff3c3c" stroke-width="1"/>
<rect x="381.0" y="365.0" width="3" height="9.0" fill="#ff3c3c"/>
<rect x="382.0" y="366.0" width="1" height="7.0" fill="#000"/>
<path d="M385.5 362.0V369.4" stroke="#00f0f0" stroke-width="1"/>
<rect x="384.0" y="364.0" width="3" height="3.0" fill="#00f0f0"/>
<path d="M388.5 370.3V382.7" stroke="#00f0f0" stroke-width="1"/>
<rect x="387.0" y="373.0" width="3" height="7.0" fill="#00f0f0"/>
<path d="M391.5 367.0V372.0M391.5 384.0V386.8" stroke="#ff3c3c" stroke-width="1"/>
<rect x="390.0" y="372.0" width="3" height="12.0" fill="#ff3c3c"/>
<rect x="391.0" y="373.0" width="1" height="10.0" fill="#000"/>
<path d="M394.5 371.0V383.5" stroke="#00f0f0" stroke-width="1"/>
<rect x="393.0" y="371.0" width="3" height="9.0" fill="#00f0f0"/>
<path d="M397.5 368.6V374.0M397.5 376.0V381.8" stroke="#ff3c3c" stroke-width="1"/>
<rect x="396.0" y="374.0" width="3" height="2.0" fill="#ff3c3c"/>
<path d="M400.5 373.6V381.0" stroke="#00f0f0" stroke-width="1"/>
<rect x="399.0" y="378.0" width="3" height="2.0" fill="#00f0f0"/>
<path d="M403.5 376.0V376.0M403.5 382.0V383.5" stroke="#ff3c3c" stroke-width="1"/>
<rect x="402.0" y="376.0" width="3" height="6.0" fill="#ff3c3c"/>
<rect x="403.0" y="377.0" width="1" height="4.0" fill="#000"/>
<path d="M406.5 376.0V385.0" stroke="#00f0f0" stroke-width="1"/>
<rect x="405.0" y="378.0" width="3" height="4.0" fill="#00f0f0"/>
<path d="M409.5 369.0V369.0M409.5 379.0V380.2" stroke="#ff3c3c" stroke-width="1"/>
<rect x="408.0" y="369.0" width="3" height="10.0" fill="#ff3c3c"/>
<rect x="409.0" y="370.0" width="1" height="8.0" fill="#000"/>
<path d="M412.5 353.7V360.0M412.5 366.0V370.3" stroke="#ff3c3c" stroke-width="1"/>
<rect x="411.0" y="360.0" width="3" height="6.0" fill="#ff3c3c"/>
<rect x="412.0" y="361.0" width="1" height="4.0" fill="#000"/>
<path d="M415.5 361.2V370.3" stroke="#00f0f0" stroke-width="1"/>
<rect x="414.0" y="364.0" width="3" height="2.0" fill="#00f0f0"/>
<path d="M418.5 358.7V361.0M418.5 364.0V369.4" stroke="#ff3c3c" stroke-width="1"/>
<rect x="417.0" y="361.0" width="3" height="3.0" fill="#ff3c3c"/>
<rect x="418.0" y="362.0" width="1" height="1.0" fill="#000"/>
<path d="M421.5 356.2V363.7" stroke="#00f0f0" stroke-width="1"/>
<rect x="420.0" y="360.0" width="3" height="2.0" fill="#00f0f0"/>
<path d="M424.5 344.0V355.0M423.0 354.5H424.5" stroke="#f0f0f0" stroke-width="1" fill="none"/>
<path d="M427.5 339.7V347.0M427.5 354.0V354.6" stroke="#ff3c3c" stroke-width="1"/>
<rect x="426.0" y="347.0" width="3" height="7.0" fill="#ff3c3c"/>
<rect x="427.0" y="348.0" width="1" height="5.0" fill="#000"/>
<path d="M430.5 345.5V348.0M430.5 352.0V353.0" stroke="#ff3c3c" stroke-width="1"/>
<rect x="429.0" y="348.0" width="3" height="4.0" fill="#ff3c3c"/>
<rect x="430.0" y="349.0" width="1" height="2.0" fill="#000"/>
<path d="M433.5 351.0V365.3" stroke="#00f0f0" stroke-width="1"/>
<rect x="432.0" y="351.0" width="3" height="10.0" fill="#00f0f0"/>
<path d="M436.5 357.9V359.0M436.5 361.0V372.0" stroke="#ff3c3c" stroke-width="1"/>
<rect x="435.0" y="359.0" width="3" height="2.0" fill="#ff3c3c"/>
<path d="M439.5 360.0V362.0" stroke="#00f0f0" stroke-width="1"/>
<rect x="438.0" y="360.0" width="3" height="2.0" fill="#00f0f0"/>
<path d="M442.5 365.5V366.0M442.5 368.0V368.3" stroke="#ff3c3c" stroke-width="1"/>
<rect x="441.0" y="366.0" width="3" height="2.0" fill="#ff3c3c"/>
<path d="M445.5 360.3V373.6" stroke="#00f0f0" stroke-width="1"/>
<rect x="444.0" y="362.0" width="3" height="8.0" fill="#00f0f0"/>
<path d="M448.5 371.0V371.0M448.5 377.0V377.5" stroke="#ff3c3c" stroke-width="1"/>
<rect x="447.0" y="371.0" width="3" height="6.0" fill="#ff3c3c"/>
<rect x="448.0" y="372.0" width="1" height="4.0" fill="#000"/>
<path d="M451.5 365.3V366.0M451.5 374.0V377.8" stroke="#ff3c3c" stroke-width="1"/>
<rect x="450.0" y="366.0" width="3" height="8.0" fill="#ff3c3c"/>
<rect x="451.0" y="367.0" width="1" height="6.0" fill="#000"/>
<path d="M454.5 366.0V373.0" stroke="#00f0f0" stroke-width="1"/>
<rect x="453.0" y="366.0" width="3" height="3.0" fill="#00f0f0"/>
<path d="M457.5 365.7V366.0M457.5 370.0V370.4" stroke="#ff3c3c" stroke-width="1"/>
<rect x="456.0" y="366.0" width="3" height="4.0" fill="#ff3c3c"/>
<rect x="457.0" y="367.0" width="1" height="2.0" fill="#000"/>
<path d="M460.5 363.6V369.7" stroke="#00f0f0" stroke-width="1"/>
<rect x="459.0" y="365.0" width="3" height="4.0" fill="#00f0f0"/>
<path d="M463.5 361.0V365.0" stroke="#00f0f0" stroke-width="1"/>
<rect x="462.0" y="361.0" width="3" height="4.0" fill="#00f0f0"/>
<path d="M466.5 361.6V363.0M466.5 366.0V366.3" stroke="#ff3c3c" stroke-width="1"/>
<rect x="465.0" y="363.0" width="3" height="3.0" fill="#ff3c3c"/>
<rect x="466.0" y="364.0" width="1" height="1.0" fill="#000"/>
<path d="M469.5 370.0V372.0" stroke="#00f0f0" stroke-width="1"/>
<rect x="468.0" y="370.0" width="3" height="2.0" fill="#00f0f0"/>
<path d="M472.5 375.8V378.0M472.5 380.0V381.2" stroke="#ff3c3c" stroke-width="1"/>
<rect x="471.0" y="378.0" width="3" height="2.0" fill="#ff3c3c"/>
<path d="M475.5 377.8V388.0" stroke="#00f0f0" stroke-width="1"/>
<rect x="474.0" y="381.0" width="3" height="2.0" fill="#00f0f0"/>
<path d="M478.5 364.3V372.0M478.5 378.0V378.5" stroke="#ff3c3c" stroke-width="1"/>
<rect x="477.0" y="372.0" width="3" height="6.0" fill="#ff3c3c"/>
<rect x="478.0" y="373.0" width="1" height="4.0" fill="#000"/>
<path d="M481.5 348.0V348.0M481.5 356.0V356.9" stroke="#ff3c3c" stroke-width="1"/>
<rect x="480.0" y="348.0" width="3" height="8.0" fill="#ff3c3c"/>
<rect x="481.0" y="349.0" width="1" height="6.0" fill="#000"/>
<path d="M484.5 346.7V354.0" stroke="#00f0f0" stroke-width="1"/>
<rect x="483.0" y="349.0" width="3" height="2.0" fill="#00f0f0"/>
<path d="M487.5 343.3V345.0M487.5 354.0V354.0" stroke="#ff3c3c" stroke-width="1"/>
<rect x="486.0" y="345.0" width="3" height="9.0" fill="#ff3c3c"/>
<rect x="487.0" y="346.0" width="1" height="7.0" fill="#000"/>
<path d="M490.5 338.6V341.0M490.5 345.0V345.0" stroke="#ff3c3c" stroke-width="1"/>
<rect x="489.0" y="341.0" width="3" height="4.0" fill="#ff3c3c"/>
<rect x="490.0" y="342.0" width="1" height="2.0" fill="#000"/>
<path d="M493.5 331.0V333.0M493.5 343.0V343.3" stroke="#ff3c3c" stroke-width="1"/>
<rect x="492.0" y="333.0" width="3" height="10.0" fill="#ff3c3c"/>
<rect x="493.0" y="334.0" width="1" height="8.0" fill="#000"/>
<path d="M496.5 333.9V337.0M496.5 338.0V340.0" stroke="#ff3c3c" stroke-width="1"/>
<rect x="495.0" y="337.0" width="3" height="1.0" fill="#ff3c3c"/>
<path d="M499.5 331.8V344.0" stroke="#00f0f0" stroke-width="1"/>
<rect x="498.0" y="335.0" width="3" height="6.0" fill="#00f0f0"/>
<path d="M502.5 319.0V319.0M502.5 336.0V337.0" stroke="#ff3c3c" stroke-width="1"/>
<rect x="501.0" y="319.0" width="3" height="17.0" fill="#ff3c3c"/>
<rect x="502.0" y="320.0" width="1" height="15.0" fill="#000"/>
<path d="M505.5 315.0V316.0M505.5 321.0V321.7" stroke="#ff3c3c" stroke-width="1"/>
<rect x="504.0" y="316.0" width="3" height="5.0" fill="#ff3c3c"/>
<rect x="505.0" y="317.0" width="1" height="3.0" fill="#000"/>
<path d="M508.5 321.0V336.0" stroke="#00f0f0" stroke-width="1"/>
<rect x="507.0" y="321.0" width="3" height="15.0" fill="#00f0f0"/>
<path d="M511.5 327.0V330.0M511.5 332.0V336.6" stroke="#ff3c3c" stroke-width="1"/>
<rect x="510.0" y="330.0" width="3" height="2.0" fill="#ff3c3c"/>
<path d="M514.5 328.4V332.0M514.5 337.0V337.2" stroke="#ff3c3c" stroke-width="1"/>
<rect x="513.0" y="332.0" width="3" height="5.0" fill="#ff3c3c"/>
<rect x="514.0" y="333.0" width="1" height="3.0" fill="#000"/>
<path d="M517.5 329.0V343.3" stroke="#00f0f0" stroke-width="1"/>
<rect x="516.0" y="329.0" width="3" height="11.0" fill="#00f0f0"/>
<path d="M520.5 326.0V326.0M520.5 339.0V339.0" stroke="#ff3c3c" stroke-width="1"/>
<rect x="519.0" y="326.0" width="3" height="13.0" fill="#ff3c3c"/>
<rect x="520.0" y="327.0" width="1" height="11.0" fill="#000"/>
<path d="M523.5 323.0V337.5" stroke="#00f0f0" stroke-width="1"/>
<rect x="522.0" y="323.0" width="3" height="7.0" fill="#00f0f0"/>
<path d="M526.5 333.0V337.8" stroke="#00f0f0" stroke-width="1"/>
<rect x="525.0" y="333.0" width="3" height="2.0" fill="#00f0f0"/>
<path d="M529.5 310.0V311.0M529.5 341.0V342.6" stroke="#ff3c3c" stroke-width="1"/>
<rect x="528.0" y="311.0" width="3" height="30.0" fill="#ff3c3c"/>
<rect x="529.0" y="312.0" width="1" height="28.0" fill="#000"/>
<path d="M532.5 295.0V297.0M532.5 316.0V316.7" stroke="#ff3c3c" stroke-width="1"/>
<rect x="531.0" y="297.0" width="3" height="19.0" fill="#ff3c3c"/>
<rect x="532.0" y="298.0" width="1" height="17.0" fill="#000"/>
<path d="M535.5 286.6V294.0M535.5 298.0V304.0" stroke="#ff3c3c" stroke-width="1"/>
<rect x="534.0" y="294.0" width="3" height="4.0" fill="#ff3c3c"/>
<rect x="535.0" y="295.0" width="1" height="2.0" fill="#000"/>
<path d="M538.5 290.8V304.7" stroke="#00f0f0" stroke-width="1"/>
<rect x="537.0" y="294.0" width="3" height="7.0" fill="#00f0f0"/>
<path d="M541.5 301.0V303.0M541.5 308.0V311.9" stroke="#ff3c3c" stroke-width="1"/>
<rect x="540.0" y="303.0" width="3" height="5.0" fill="#ff3c3c"/>
<rect x="541.0" y="304.0" width="1" height="3.0" fill="#000"/>
<path d="M544.5 289.0V294.0M544.5 302.0V302.9" stroke="#ff3c3c" stroke-width="1"/>
<rect x="543.0" y="294.0" width="3" height="8.0" fill="#ff3c3c"/>
<rect x="544.0" y="295.0" width="1" height="6.0" fill="#000"/>
<path d="M547.5 283.0V288.0M547.5 296.0V301.7" stroke="#ff3c3c" stroke-width="1"/>
<rect x="546.0" y="288.0" width="3" height="8.0" fill="#ff3c3c"/>
<rect x="547.0" y="289.0" width="1" height="6.0" fill="#000"/>
<path d="M550.5 281.0V311.9" stroke="#00f0f0" stroke-width="1"/>
<rect x="549.0" y="281.0" width="3" height="27.0" fill="#00f0f0"/>
<path d="M553.5 308.9V318.7" stroke="#00f0f0" stroke-width="1"/>
<rect x="552.0" y="312.0" width="3" height="2.0" fill="#00f0f0"/>
<path d="M556.5 305.9V310.0M556.5 316.0V318.7" stroke="#ff3c3c" stroke-width="1"/>
<rect x="555.0" y="310.0" width="3" height="6.0" fill="#ff3c3c"/>
<rect x="556.0" y="311.0" width="1" height="4.0" fill="#000"/>
<path d="M559.5 302.0V316.5" stroke="#00f0f0" stroke-width="1"/>
<rect x="558.0" y="302.0" width="3" height="5.0" fill="#00f0f0"/>
<path d="M562.5 304.0V319.7" stroke="#00f0f0" stroke-width="1"/>
<rect x="561.0" y="304.0" width="3" height="14.0" fill="#00f0f0"/>
<path d="M565.5 308.0V317.3" stroke="#00f0f0" stroke-width="1"/>
<rect x="564.0" y="309.0" width="3" height="7.0" fill="#00f0f0"/>
<path d="M568.5 310.0V322.7" stroke="#00f0f0" stroke-width="1"/>
<rect x="567.0" y="310.0" width="3" height="12.0" fill="#00f0f0"/>
<path d="M571.5 313.0V331.7" stroke="#00f0f0" stroke-width="1"/>
<rect x="570.0" y="315.0" width="3" height="6.0" fill="#00f0f0"/>
<path d="M574.5 314.9V325.0" stroke="#00f0f0" stroke-width="1"/>
<rect x="573.0" y="316.0" width="3" height="7.0" fill="#00f0f0"/>
<path d="M577.5 316.0V327.0" stroke="#00f0f0" stroke-width="1"/>
<rect x="576.0" y="320.0" width="3" height="6.0" fill="#00f0f0"/>
<path d="M580.5 316.0V318.0M580.5 324.0V329.9" stroke="#ff3c3c" stroke-width="1"/>
<rect x="579.0" y="318.0" width="3" height="6.0" fill="#ff3c3c"/>
<rect x="580.0" y="319.0" width="1" height="4.0" fill="#000"/>
<path d="M583.5 314.9V323.0" stroke="#00f0f0" stroke-width="1"/>
<rect x="582.0" y="317.0" width="3" height="6.0" fill="#00f0f0"/>
<path d="M586.5 314.9V319.0M586.5 323.0V331.7" stroke="#ff3c3c" stroke-width="1"/>
<rect x="585.0" y="319.0" width="3" height="4.0" fill="#ff3c3c"/>
<rect x="586.0" y="320.0" width="1" height="2.0" fill="#000"/>
<path d="M589.5 295.0V301.0M589.5 306.0V313.0" stroke="#ff3c3c" stroke-width="1"/>
<rect x="588.0" y="301.0" width="3" height="5.0" fill="#ff3c3c"/>
<rect x="589.0" y="302.0" width="1" height="3.0" fill="#000"/>
<path d="M592.5 293.2V313.0" stroke="#00f0f0" stroke-width="1"/>
<rect x="591.0" y="296.0" width="3" height="15.0" fill="#00f0f0"/>
<path d="M595.5 299.9V314.0" stroke="#00f0f0" stroke-width="1"/>
<rect x="594.0" y="303.0" width="3" height="11.0" fill="#00f0f0"/>
<path d="M598.5 310.0V329.9" stroke="#00f0f0" stroke-width="1"/>
<rect x="597.0" y="312.0" width="3" height="4.0" fill="#00f0f0"/>
<path d="M601.5 290.8V293.0M601.5 306.0V311.9" stroke="#ff3c3c" stroke-width="1"/>
<rect x="600.0" y="293.0" width="3" height="13.0" fill="#ff3c3c"/>
<rect x="601.0" y="294.0" width="1" height="11.0" fill="#000"/>
<path d="M604.5 283.6V299.9" stroke="#00f0f0" stroke-width="1"/>
<rect x="603.0" y="288.0" width="3" height="10.0" fill="#00f0f0"/>
<path d="M607.5 277.0V280.0M607.5 299.0V299.9" stroke="#ff3c3c" stroke-width="1"/>
<rect x="606.0" y="280.0" width="3" height="19.0" fill="#ff3c3c"/>
<rect x="607.0" y="281.0" width="1" height="17.0" fill="#000"/>
<path d="M610.5 275.6V277.0M610.5 280.0V289.6" stroke="#ff3c3c" stroke-width="1"/>
<rect x="609.0" y="277.0" width="3" height="3.0" fill="#ff3c3c"/>
<rect x="610.0" y="278.0" width="1" height="1.0" fill="#000"/>
<path d="M613.5 269.6V280.0M613.5 281.0V281.6" stroke="#ff3c3c" stroke-width="1"/>
<rect x="612.0" y="280.0" width="3" height="1.0" fill="#ff3c3c"/>
<path d="M616.5 263.3V266.0M616.5 276.0V279.8" stroke="#ff3c3c" stroke-width="1"/>
<rect x="615.0" y="266.0" width="3" height="10.0" fill="#ff3c3c"/>
<rect x="616.0" y="267.0" width="1" height="8.0" fill="#000"/>
<path d="M619.5 250.5V254.0M619.5 261.0V266.0" stroke="#ff3c3c" stroke-width="1"/>
<rect x="618.0" y="254.0" width="3" height="7.0" fill="#ff3c3c"/>
<rect x="619.0" y="255.0" width="1" height="5.0" fill="#000"/>
<path d="M622.5 253.2V274.8" stroke="#00f0f0" stroke-width="1"/>
<rect x="621.0" y="260.0" width="3" height="13.0" fill="#00f0f0"/>
<path d="M625.5 246.4V248.0M625.5 274.0V276.9" stroke="#ff3c3c" stroke-width="1"/>
<rect x="624.0" y="248.0" width="3" height="26.0" fill="#ff3c3c"/>
<rect x="625.0" y="249.0" width="1" height="24.0" fill="#000"/>
<path d="M628.5 244.4V257.2" stroke="#00f0f0" stroke-width="1"/>
<rect x="627.0" y="245.0" width="3" height="3.0" fill="#00f0f0"/>
<path d="M631.5 223.4V242.0M631.5 247.0V247.8" stroke="#ff3c3c" stroke-width="1"/>
<rect x="630.0" y="242.0" width="3" height="5.0" fill="#ff3c3c"/>
<rect x="631.0" y="243.0" width="1" height="3.0" fill="#000"/>
<path d="M634.5 242.4V248.0M634.5 250.0V259.3" stroke="#ff3c3c" stroke-width="1"/>
<rect x="633.0" y="248.0" width="3" height="2.0" fill="#ff3c3c"/>
<path d="M637.5 253.9V265.4" stroke="#00f0f0" stroke-width="1"/>
<rect x="636.0" y="259.0" width="3" height="4.0" fill="#00f0f0"/>
<path d="M640.5 247.8V274.8" stroke="#00f0f0" stroke-width="1"/>
<rect x="639.0" y="257.0" width="3" height="16.0" fill="#00f0f0"/>
<path d="M643.5 264.0V265.0M643.5 275.0V285.0" stroke="#ff3c3c" stroke-width="1"/>
<rect x="642.0" y="265.0" width="3" height="10.0" fill="#ff3c3c"/>
<rect x="643.0" y="266.0" width="1" height="8.0" fill="#000"/>
<path d="M646.5 268.7V281.6" stroke="#00f0f0" stroke-width="1"/>
<rect x="645.0" y="273.0" width="3" height="3.0" fill="#00f0f0"/>
<path d="M649.5 274.8V300.5" stroke="#00f0f0" stroke-width="1"/>
<rect x="648.0" y="277.0" width="3" height="19.0" fill="#00f0f0"/>
<path d="M652.5 353.0V394.0M651.0 393.5H652.5" stroke="#f0f0f0" stroke-width="1" fill="none"/>
<path d="M655.5 370.5V396.0M655.5 404.0V407.0" stroke="#ff3c3c" stroke-width="1"/>
<rect x="654.0" y="396.0" width="3" height="8.0" fill="#ff3c3c"/>
<rect x="655.0" y="397.0" width="1" height="6.0" fill="#000"/>
<path d="M658.5 383.0V434.6" stroke="#00f0f0" stroke-width="1"/>
<rect x="657.0" y="394.0" width="3" height="25.0" fill="#00f0f0"/>
<path d="M661.5 354.0V357.0M661.5 419.0V427.0" stroke="#ff3c3c" stroke-width="1"/>
<rect x="660.0" y="357.0" width="3" height="62.0" fill="#ff3c3c"/>
<rect x="661.0" y="358.0" width="1" height="60.0" fill="#000"/>
<path d="M664.5 358.0V362.0M664.5 367.0V382.0" stroke="#ff3c3c" stroke-width="1"/>
<rect x="663.0" y="362.0" width="3" height="5.0" fill="#ff3c3c"/>
<rect x="664.0" y="363.0" width="1" height="3.0" fill="#000"/>
<path d="M667.5 339.0V342.0M667.5 356.0V365.0" stroke="#ff3c3c" stroke-width="1"/>
<rect x="666.0" y="342.0" width="3" height="14.0" fill="#ff3c3c"/>
<rect x="667.0" y="343.0" width="1" height="12.0" fill="#000"/>
<path d="M670.5 336.0V348.0" stroke="#00f0f0" stroke-width="1"/>
<rect x="669.0" y="338.0" width="3" height="8.0" fill="#00f0f0"/>
<path d="M673.5 343.0V365.6" stroke="#00f0f0" stroke-width="1"/>
<rect x="672.0" y="353.0" width="3" height="7.0" fill="#00f0f0"/>
<path d="M676.5 341.6V352.0M676.5 356.0V360.6" stroke="#ff3c3c" stroke-width="1"/>
<rect x="675.0" y="352.0" width="3" height="4.0" fill="#ff3c3c"/>
<rect x="676.0" y="353.0" width="1" height="2.0" fill="#000"/>
<path d="M679.5 341.6V344.0M679.5 349.0V355.0" stroke="#ff3c3c" stroke-width="1"/>
<rect x="678.0" y="344.0" width="3" height="5.0" fill="#ff3c3c"/>
<rect x="679.0" y="345.0" width="1" height="3.0" fill="#000"/>
<path d="M682.5 328.2V330.0M682.5 346.0V350.7" stroke="#ff3c3c" stroke-width="1"/>
<rect x="681.0" y="330.0" width="3" height="16.0" fill="#ff3c3c"/>
<rect x="682.0" y="331.0" width="1" height="14.0" fill="#000"/>
<path d="M685.5 327.0V340.5" stroke="#00f0f0" stroke-width="1"/>
<rect x="684.0" y="327.0" width="3" height="6.0" fill="#00f0f0"/>
<path d="M688.5 309.2V318.0M688.5 328.0V332.0" stroke="#ff3c3c" stroke-width="1"/>
<rect x="687.0" y="318.0" width="3" height="10.0" fill="#ff3c3c"/>
<rect x="688.0" y="319.0" width="1" height="8.0" fill="#000"/>
<path d="M691.5 314.6V330.3" stroke="#00f0f0" stroke-width="1"/>
<rect x="690.0" y="316.0" width="3" height="13.0" fill="#00f0f0"/>
<path d="M694.5 317.0V330.0M693.0 329.5H694.5" stroke="#f0f0f0" stroke-width="1" fill="none"/>
<path d="M697.5 326.0V335.7" stroke="#00f0f0" stroke-width="1"/>
<rect x="696.0" y="326.0" width="3" height="4.0" fill="#00f0f0"/>
<path d="M700.5 324.9V333.3" stroke="#00f0f0" stroke-width="1"/>
<rect x="699.0" y="328.0" width="3" height="1.0" fill="#00f0f0"/>
<path d="M703.5 320.7V344.7" stroke="#00f0f0" stroke-width="1"/>
<rect x="702.0" y="322.0" width="3" height="21.0" fill="#00f0f0"/>
<path d="M706.5 326.0V342.0M706.5 344.0V344.7" stroke="#ff3c3c" stroke-width="1"/>
<rect x="705.0" y="342.0" width="3" height="2.0" fill="#ff3c3c"/>
<path d="M709.5 323.0V338.0M709.5 339.0V341.7" stroke="#ff3c3c" stroke-width="1"/>
<rect x="708.0" y="338.0" width="3" height="1.0" fill="#ff3c3c"/>
<path d="M712.5 333.9V349.5" stroke="#00f0f0" stroke-width="1"/>
<rect x="711.0" y="338.0" width="3" height="11.0" fill="#00f0f0"/>
<path d="M715.5 335.0V348.0M715.5 349.0V349.0" stroke="#ff3c3c" stroke-width="1"/>
<rect x="714.0" y="348.0" width="3" height="1.0" fill="#ff3c3c"/>
<path d="M718.5 324.0V324.0M718.5 342.0V342.0" stroke="#ff3c3c" stroke-width="1"/>
<rect x="717.0" y="324.0" width="3" height="18.0" fill="#ff3c3c"/>
<rect x="718.0" y="325.0" width="1" height="16.0" fill="#000"/>
<path d="M721.5 324.0V332.0" stroke="#00f0f0" stroke-width="1"/>
<rect x="720.0" y="324.0" width="3" height="3.0" fill="#00f0f0"/>
<path d="M724.5 313.0V313.0M724.5 331.0V331.0" stroke="#ff3c3c" stroke-width="1"/>
<rect x="723.0" y="313.0" width="3" height="18.0" fill="#ff3c3c"/>
<rect x="724.0" y="314.0" width="1" height="16.0" fill="#000"/>
<path d="M727.5 311.0V332.7" stroke="#00f0f0" stroke-width="1"/>
<rect x="726.0" y="312.0" width="3" height="20.0" fill="#00f0f0"/>
<path d="M730.5 318.3V329.0" stroke="#00f0f0" stroke-width="1"/>
<rect x="729.0" y="326.0" width="3" height="2.0" fill="#00f0f0"/>
<path d="M733.5 330.3V339.9" stroke="#00f0f0" stroke-width="1"/>
<rect x="732.0" y="333.0" width="3" height="2.0" fill="#00f0f0"/>
<path d="M736.5 327.9V336.3" stroke="#00f0f0" stroke-width="1"/>
<rect x="735.0" y="329.0" width="3" height="7.0" fill="#00f0f0"/>
<path d="M739.5 318.3V322.0M739.5 332.0V332.0" stroke="#ff3c3c" stroke-width="1"/>
<rect x="738.0" y="322.0" width="3" height="10.0" fill="#ff3c3c"/>
<rect x="739.0" y="323.0" width="1" height="8.0" fill="#000"/>
<path d="M742.5 322.0V327.9" stroke="#00f0f0" stroke-width="1"/>
<rect x="741.0" y="322.0" width="3" height="4.0" fill="#00f0f0"/>
<path d="M745.5 325.5V333.9" stroke="#00f0f0" stroke-width="1"/>
<rect x="744.0" y="328.0" width="3" height="4.0" fill="#00f0f0"/>
<path d="M748.5 318.9V323.0M748.5 332.0V332.7" stroke="#ff3c3c" stroke-width="1"/>
<rect x="747.0" y="323.0" width="3" height="9.0" fill="#ff3c3c"/>
<rect x="748.0" y="324.0" width="1" height="7.0" fill="#000"/>
<path d="M751.5 317.0V324.0M751.5 327.0V327.3" stroke="#ff3c3c" stroke-width="1"/>
<rect x="750.0" y="324.0" width="3" height="3.0" fill="#ff3c3c"/>
<rect x="751.0" y="325.0" width="1" height="1.0" fill="#000"/>
<path d="M754.5 316.5V323.7" stroke="#00f0f0" stroke-width="1"/>
<rect x="753.0" y="320.0" width="3" height="3.0" fill="#00f0f0"/>
<path d="M757.5 315.2V316.0M757.5 320.0V325.5" stroke="#ff3c3c" stroke-width="1"/>
<rect x="756.0" y="316.0" width="3" height="4.0" fill="#ff3c3c"/>
<rect x="757.0" y="317.0" width="1" height="2.0" fill="#000"/>
<path d="M760.5 317.7V326.0" stroke="#00f0f0" stroke-width="1"/>
<rect x="759.0" y="318.0" width="3" height="8.0" fill="#00f0f0"/>
<path d="M763.5 314.0V330.9" stroke="#00f0f0" stroke-width="1"/>
<rect x="762.0" y="319.0" width="3" height="6.0" fill="#00f0f0"/>
<path d="M766.5 309.8V315.0M766.5 321.0V321.3" stroke="#ff3c3c" stroke-width="1"/>
<rect x="765.0" y="315.0" width="3" height="6.0" fill="#ff3c3c"/>
<rect x="766.0" y="316.0" width="1" height="4.0" fill="#000"/>
<path d="M769.5 311.6V320.0" stroke="#00f0f0" stroke-width="1"/>
<rect x="768.0" y="312.0" width="3" height="4.0" fill="#00f0f0"/>
<path d="M772.5 294.2V300.0M772.5 301.0V309.8" stroke="#ff3c3c" stroke-width="1"/>
<rect x="771.0" y="300.0" width="3" height="1.0" fill="#ff3c3c"/>
<path d="M775.5 301.4V302.0M775.5 303.0V308.6" stroke="#ff3c3c" stroke-width="1"/>
<rect x="774.0" y="302.0" width="3" height="1.0" fill="#ff3c3c"/>
<path d="M778.5 291.8V301.0M778.5 303.0V303.0" stroke="#ff3c3c" stroke-width="1"/>
<rect x="777.0" y="301.0" width="3" height="2.0" fill="#ff3c3c"/>
<path d="M781.5 293.0V294.0M781.5 298.0V299.6" stroke="#ff3c3c" stroke-width="1"/>
<rect x="780.0" y="294.0" width="3" height="4.0" fill="#ff3c3c"/>
<rect x="781.0" y="295.0" width="1" height="2.0" fill="#000"/>
<path d="M784.5 302.0V309.8" stroke="#00f0f0" stroke-width="1"/>
<rect x="783.0" y="302.0" width="3" height="5.0" fill="#00f0f0"/>
<path d="M787.5 305.0V323.7" stroke="#00f0f0" stroke-width="1"/>
<rect x="786.0" y="306.0" width="3" height="15.0" fill="#00f0f0"/>
<path d="M790.5 309.8V310.0M790.5 322.0V324.9" stroke="#ff3c3c" stroke-width="1"/>
<rect x="789.0" y="310.0" width="3" height="12.0" fill="#ff3c3c"/>
<rect x="790.0" y="311.0" width="1" height="10.0" fill="#000"/>
<path d="M793.5 304.4V308.0M793.5 309.0V312.8" stroke="#ff3c3c" stroke-width="1"/>
<rect x="792.0" y="308.0" width="3" height="1.0" fill="#ff3c3c"/>
<path d="M796.5 302.0V303.0M796.5 310.0V313.0" stroke="#ff3c3c" stroke-width="1"/>
<rect x="795.0" y="303.0" width="3" height="7.0" fill="#ff3c3c"/>
<rect x="796.0" y="304.0" width="1" height="5.0" fill="#000"/>
<path d="M799.5 304.0V315.3" stroke="#00f0f0" stroke-width="1"/>
<rect x="798.0" y="305.0" width="3" height="9.0" fill="#00f0f0"/>
<path d="M802.5 310.0V320.7" stroke="#00f0f0" stroke-width="1"/>
<rect x="801.0" y="314.0" width="3" height="6.0" fill="#00f0f0"/>
<path d="M805.5 309.0V317.0" stroke="#00f0f0" stroke-width="1"/>
<rect x="804.0" y="309.0" width="3" height="6.0" fill="#00f0f0"/>
<path d="M808.5 305.0V305.0M808.5 315.0V316.0" stroke="#ff3c3c" stroke-width="1"/>
<rect x="807.0" y="305.0" width="3" height="10.0" fill="#ff3c3c"/>
<rect x="808.0" y="306.0" width="1" height="8.0" fill="#000"/>
<path d="M811.5 302.0V303.0M811.5 310.0V311.7" stroke="#ff3c3c" stroke-width="1"/>
<rect x="810.0" y="303.0" width="3" height="7.0" fill="#ff3c3c"/>
<rect x="811.0" y="304.0" width="1" height="5.0" fill="#000"/>
<path d="M814.5 296.7V298.0M814.5 305.0V306.3" stroke="#ff3c3c" stroke-width="1"/>
<rect x="813.0" y="298.0" width="3" height="7.0" fill="#ff3c3c"/>
<rect x="814.0" y="299.0" width="1" height="5.0" fill="#000"/>
<path d="M817.5 276.9V280.0M817.5 290.0V290.0" stroke="#ff3c3c" stroke-width="1"/>
<rect x="816.0" y="280.0" width="3" height="10.0" fill="#ff3c3c"/>
<rect x="817.0" y="281.0" width="1" height="8.0" fill="#000"/>
<path d="M820.5 279.3V282.0M820.5 284.0V288.9" stroke="#ff3c3c" stroke-width="1"/>
<rect x="819.0" y="282.0" width="3" height="2.0" fill="#ff3c3c"/>
<path d="M823.5 267.2V269.0M823.5 286.0V287.7" stroke="#ff3c3c" stroke-width="1"/>
<rect x="822.0" y="269.0" width="3" height="17.0" fill="#ff3c3c"/>
<rect x="823.0" y="270.0" width="1" height="15.0" fill="#000"/>
<path d="M826.5 263.0V274.5" stroke="#00f0f0" stroke-width="1"/>
<rect x="825.0" y="269.0" width="3" height="2.0" fill="#00f0f0"/>
<path d="M829.5 260.6V268.0M829.5 270.0V270.0" stroke="#ff3c3c" stroke-width="1"/>
<rect x="828.0" y="268.0" width="3" height="2.0" fill="#ff3c3c"/>
<path d="M832.5 263.6V286.5" stroke="#00f0f0" stroke-width="1"/>
<rect x="831.0" y="270.0" width="3" height="15.0" fill="#00f0f0"/>
<path d="M835.5 279.9V294.9" stroke="#00f0f0" stroke-width="1"/>
<rect x="834.0" y="284.0" width="3" height="8.0" fill="#00f0f0"/>
<path d="M838.5 284.7V285.0M838.5 291.0V292.0" stroke="#ff3c3c" stroke-width="1"/>
<rect x="837.0" y="285.0" width="3" height="6.0" fill="#ff3c3c"/>
<rect x="838.0" y="286.0" width="1" height="4.0" fill="#000"/>
<path d="M841.5 273.3V308.7" stroke="#00f0f0" stroke-width="1"/>
<rect x="840.0" y="285.0" width="3" height="22.0" fill="#00f0f0"/>
<path d="M844.5 296.0V297.0M844.5 308.0V310.0" stroke="#ff3c3c" stroke-width="1"/>
<rect x="843.0" y="297.0" width="3" height="11.0" fill="#ff3c3c"/>
<rect x="844.0" y="298.0" width="1" height="9.0" fill="#000"/>
<path d="M847.5 293.7V300.3" stroke="#00f0f0" stroke-width="1"/>
<rect x="846.0" y="295.0" width="3" height="5.0" fill="#00f0f0"/>
<path d="M850.5 296.0V297.0M850.5 304.0V307.5" stroke="#ff3c3c" stroke-width="1"/>
<rect x="849.0" y="297.0" width="3" height="7.0" fill="#ff3c3c"/>
<rect x="850.0" y="298.0" width="1" height="5.0" fill="#000"/>
<path d="M853.5 300.3V303.0M853.5 307.0V310.0" stroke="#ff3c3c" stroke-width="1"/>
<rect x="852.0" y="303.0" width="3" height="4.0" fill="#ff3c3c"/>
<rect x="853.0" y="304.0" width="1" height="2.0" fill="#000"/>
<path d="M856.5 300.3V303.0M856.5 304.0V306.9" stroke="#ff3c3c" stroke-width="1"/>
<rect x="855.0" y="303.0" width="3" height="1.0" fill="#ff3c3c"/>
<path d="M859.5 301.0V307.0" stroke="#00f0f0" stroke-width="1"/>
<rect x="858.0" y="304.0" width="3" height="3.0" fill="#00f0f0"/>
<path d="M862.5 291.3V294.0M862.5 307.0V307.0" stroke="#ff3c3c" stroke-width="1"/>
<rect x="861.0" y="294.0" width="3" height="13.0" fill="#ff3c3c"/>
<rect x="862.0" y="295.0" width="1" height="11.0" fill="#000"/>
<path d="M865.5 267.2V268.0M865.5 293.0V293.7" stroke="#ff3c3c" stroke-width="1"/>
<rect x="864.0" y="268.0" width="3" height="25.0" fill="#ff3c3c"/>
<rect x="865.0" y="269.0" width="1" height="23.0" fill="#000"/>
<path d="M868.5 266.0V275.0" stroke="#00f0f0" stroke-width="1"/>
<rect x="867.0" y="268.0" width="3" height="2.0" fill="#00f0f0"/>
<path d="M871.5 262.4V272.7" stroke="#00f0f0" stroke-width="1"/>
<rect x="870.0" y="265.0" width="3" height="7.0" fill="#00f0f0"/>
<path d="M874.5 262.4V271.5" stroke="#00f0f0" stroke-width="1"/>
<rect x="873.0" y="265.0" width="3" height="2.0" fill="#00f0f0"/>
<path d="M877.5 271.5V281.7" stroke="#00f0f0" stroke-width="1"/>
<rect x="876.0" y="272.0" width="3" height="7.0" fill="#00f0f0"/>
<path d="M880.5 276.9V287.0" stroke="#00f0f0" stroke-width="1"/>
<rect x="879.0" y="279.0" width="3" height="4.0" fill="#00f0f0"/>
<path d="M883.5 278.0V286.5" stroke="#00f0f0" stroke-width="1"/>
<rect x="882.0" y="280.0" width="3" height="6.0" fill="#00f0f0"/>
<path d="M886.5 278.0V286.0" stroke="#00f0f0" stroke-width="1"/>
<rect x="885.0" y="281.0" width="3" height="5.0" fill="#00f0f0"/>
<path d="M889.5 284.0V303.9" stroke="#00f0f0" stroke-width="1"/>
<rect x="888.0" y="288.0" width="3" height="13.0" fill="#00f0f0"/>
<path d="M892.5 288.3V294.0M892.5 300.0V303.9" stroke="#ff3c3c" stroke-width="1"/>
<rect x="891.0" y="294.0" width="3" height="6.0" fill="#ff3c3c"/>
<rect x="892.0" y="295.0" width="1" height="4.0" fill="#000"/>
<path d="M895.5 291.9V302.0" stroke="#00f0f0" stroke-width="1"/>
<rect x="894.0" y="293.0" width="3" height="4.0" fill="#00f0f0"/>
<path d="M898.5 290.0V290.0M898.5 295.0V295.5" stroke="#ff3c3c" stroke-width="1"/>
<rect x="897.0" y="290.0" width="3" height="5.0" fill="#ff3c3c"/>
<rect x="898.0" y="291.0" width="1" height="3.0" fill="#000"/>
<path d="M901.5 294.9V296.0M901.5 297.0V300.9" stroke="#ff3c3c" stroke-width="1"/>
<rect x="900.0" y="296.0" width="3" height="1.0" fill="#ff3c3c"/>
<path d="M904.5 291.9V293.0M904.5 294.0V296.7" stroke="#ff3c3c" stroke-width="1"/>
<rect x="903.0" y="293.0" width="3" height="1.0" fill="#ff3c3c"/>
<path d="M907.5 291.5V292.0M907.5 294.0V296.0" stroke="#ff3c3c" stroke-width="1"/>
<rect x="906.0" y="292.0" width="3" height="2.0" fill="#ff3c3c"/>
<path d="M910.5 279.2V281.0M910.5 292.0V292.8" stroke="#ff3c3c" stroke-width="1"/>
<rect x="909.0" y="281.0" width="3" height="11.0" fill="#ff3c3c"/>
<rect x="910.0" y="282.0" width="1" height="9.0" fill="#000"/>
<path d="M913.5 279.0V280.0M913.5 286.0V287.0" stroke="#ff3c3c" stroke-width="1"/>
<rect x="912.0" y="280.0" width="3" height="6.0" fill="#ff3c3c"/>
<rect x="913.0" y="281.0" width="1" height="4.0" fill="#000"/>
<path d="M916.5 270.0V273.0M916.5 277.0V278.5" stroke="#ff3c3c" stroke-width="1"/>
<rect x="915.0" y="273.0" width="3" height="4.0" fill="#ff3c3c"/>
<rect x="916.0" y="274.0" width="1" height="2.0" fill="#000"/>
<path d="M919.5 274.0V283.3" stroke="#00f0f0" stroke-width="1"/>
<rect x="918.0" y="274.0" width="3" height="9.0" fill="#00f0f0"/>
<path d="M922.5 279.0V280.0M922.5 285.0V285.7" stroke="#ff3c3c" stroke-width="1"/>
<rect x="921.0" y="280.0" width="3" height="5.0" fill="#ff3c3c"/>
<rect x="922.0" y="281.0" width="1" height="3.0" fill="#000"/>
<path d="M925.5 276.7V285.7" stroke="#00f0f0" stroke-width="1"/>
<rect x="924.0" y="281.0" width="3" height="3.0" fill="#00f0f0"/>
<path d="M928.5 284.0V284.0M928.5 287.0V287.0" stroke="#ff3c3c" stroke-width="1"/>
<rect x="927.0" y="284.0" width="3" height="3.0" fill="#ff3c3c"/>
<rect x="928.0" y="285.0" width="1" height="1.0" fill="#000"/>
<path d="M931.5 285.7V293.5" stroke="#00f0f0" stroke-width="1"/>
<rect x="930.0" y="288.0" width="3" height="1.0" fill="#00f0f0"/>
<path d="M934.5 286.3V293.0" stroke="#00f0f0" stroke-width="1"/>
<rect x="933.0" y="290.0" width="3" height="2.0" fill="#00f0f0"/>
<path d="M937.5 285.0V288.0M937.5 290.0V291.0" stroke="#ff3c3c" stroke-width="1"/>
<rect x="936.0" y="288.0" width="3" height="2.0" fill="#ff3c3c"/>
<path d="M940.5 267.0V269.0M940.5 290.0V290.0" stroke="#ff3c3c" stroke-width="1"/>
<rect x="939.0" y="269.0" width="3" height="21.0" fill="#ff3c3c"/>
<rect x="940.0" y="270.0" width="1" height="19.0" fill="#000"/>
<path d="M943.5 267.0V281.0" stroke="#00f0f0" stroke-width="1"/>
<rect x="942.0" y="269.0" width="3" height="9.0" fill="#00f0f0"/>
<path d="M946.5 271.3V279.7" stroke="#00f0f0" stroke-width="1"/>
<rect x="945.0" y="277.0" width="3" height="1.0" fill="#00f0f0"/>
<path d="M949.5 283.0V283.0M949.5 288.0V288.7" stroke="#ff3c3c" stroke-width="1"/>
<rect x="948.0" y="283.0" width="3" height="5.0" fill="#ff3c3c"/>
<rect x="949.0" y="284.0" width="1" height="3.0" fill="#000"/>
<path d="M952.5 271.3V274.0M952.5 283.0V285.7" stroke="#ff3c3c" stroke-width="1"/>
<rect x="951.0" y="274.0" width="3" height="9.0" fill="#ff3c3c"/>
<rect x="952.0" y="275.0" width="1" height="7.0" fill="#000"/>
<path d="M955.5 264.0V268.0M955.5 271.0V274.3" stroke="#ff3c3c" stroke-width="1"/>
<rect x="954.0" y="268.0" width="3" height="3.0" fill="#ff3c3c"/>
<rect x="955.0" y="269.0" width="1" height="1.0" fill="#000"/>
<path d="M958.5 264.0V273.0" stroke="#00f0f0" stroke-width="1"/>
<rect x="957.0" y="269.0" width="3" height="2.0" fill="#00f0f0"/>
<path d="M961.5 250.8V262.0M961.5 274.0V275.0" stroke="#ff3c3c" stroke-width="1"/>
<rect x="960.0" y="262.0" width="3" height="12.0" fill="#ff3c3c"/>
<rect x="961.0" y="263.0" width="1" height="10.0" fill="#000"/>
<path d="M964.5 256.3V273.0" stroke="#00f0f0" stroke-width="1"/>
<rect x="963.0" y="262.0" width="3" height="8.0" fill="#00f0f0"/>
<path d="M967.5 258.7V260.0M967.5 271.0V271.0" stroke="#ff3c3c" stroke-width="1"/>
<rect x="966.0" y="260.0" width="3" height="11.0" fill="#ff3c3c"/>
<rect x="967.0" y="261.0" width="1" height="9.0" fill="#000"/>
<path d="M970.5 254.0V275.5" stroke="#00f0f0" stroke-width="1"/>
<rect x="969.0" y="254.0" width="3" height="17.0" fill="#00f0f0"/>
<path d="M973.5 266.5V272.5" stroke="#00f0f0" stroke-width="1"/>
<rect x="972.0" y="268.0" width="3" height="2.0" fill="#00f0f0"/>
<path d="M976.5 265.3V267.0M976.5 269.0V273.7" stroke="#ff3c3c" stroke-width="1"/>
<rect x="975.0" y="267.0" width="3" height="2.0" fill="#ff3c3c"/>
<path d="M979.5 258.0V260.0M979.5 265.0V266.0" stroke="#ff3c3c" stroke-width="1"/>
<rect x="978.0" y="260.0" width="3" height="5.0" fill="#ff3c3c"/>
<rect x="979.0" y="261.0" width="1" height="3.0" fill="#000"/>
<path d="M982.5 241.2V242.0M982.5 260.0V262.9" stroke="#ff3c3c" stroke-width="1"/>
<rect x="981.0" y="242.0" width="3" height="18.0" fill="#ff3c3c"/>
<rect x="982.0" y="243.0" width="1" height="16.0" fill="#000"/>
<path d="M985.5 242.4V252.6" stroke="#00f0f0" stroke-width="1"/>
<rect x="984.0" y="244.0" width="3" height="2.0" fill="#00f0f0"/>
<path d="M988.5 234.0V250.8" stroke="#00f0f0" stroke-width="1"/>
<rect x="987.0" y="244.0" width="3" height="3.0" fill="#00f0f0"/>
<path d="M991.5 240.0V256.9" stroke="#00f0f0" stroke-width="1"/>
<rect x="990.0" y="243.0" width="3" height="10.0" fill="#00f0f0"/>
<path d="M994.5 261.7V273.7" stroke="#00f0f0" stroke-width="1"/>
<rect x="993.0" y="264.0" width="3" height="6.0" fill="#00f0f0"/>
<path d="M997.5 261.0V266.0M997.5 268.0V271.9" stroke="#ff3c3c" stroke-width="1"/>
<rect x="996.0" y="266.0" width="3" height="2.0" fill="#ff3c3c"/>
<path d="M1000.5 256.3V259.0M1000.5 266.0V266.5" stroke="#ff3c3c" stroke-width="1"/>
<rect x="999.0" y="259.0" width="3" height="7.0" fill="#ff3c3c"/>
<rect x="1000.0" y="260.0" width="1" height="5.0" fill="#000"/>
<path d="M1003.5 259.0V267.0" stroke="#00f0f0" stroke-width="1"/>
<rect x="1002.0" y="259.0" width="3" height="6.0" fill="#00f0f0"/>
<path d="M1006.5 259.9V265.9" stroke="#00f0f0" stroke-width="1"/>
<rect x="1005.0" y="262.0" width="3" height="2.0" fill="#00f0f0"/>
<path d="M1009.5 207.3V212.0M1009.5 251.0V252.4" stroke="#ff3c3c" stroke-width="1"/>
<rect x="1008.0" y="212.0" width="3" height="39.0" fill="#ff3c3c"/>
<rect x="1009.0" y="213.0" width="1" height="37.0" fill="#000"/>
<path d="M1012.5 204.5V216.0M1012.5 219.0V221.0" stroke="#ff3c3c" stroke-width="1"/>
<rect x="1011.0" y="216.0" width="3" height="3.0" fill="#ff3c3c"/>
<rect x="1012.0" y="217.0" width="1" height="1.0" fill="#000"/>
<path d="M1015.5 217.0V218.0M1015.5 223.0V231.2" stroke="#ff3c3c" stroke-width="1"/>
<rect x="1014.0" y="218.0" width="3" height="5.0" fill="#ff3c3c"/>
<rect x="1015.0" y="219.0" width="1" height="3.0" fill="#000"/>
<path d="M1018.5 191.0V203.0M1018.5 216.0V218.0" stroke="#ff3c3c" stroke-width="1"/>
<rect x="1017.0" y="203.0" width="3" height="13.0" fill="#ff3c3c"/>
<rect x="1018.0" y="204.0" width="1" height="11.0" fill="#000"/>
<path d="M1021.5 131.5V135.0M1021.5 170.0V175.0" stroke="#ff3c3c" stroke-width="1"/>
<rect x="1020.0" y="135.0" width="3" height="35.0" fill="#ff3c3c"/>
<rect x="1021.0" y="136.0" width="1" height="33.0" fill="#000"/>
<path d="M1024.5 110.0V154.5" stroke="#00f0f0" stroke-width="1"/>
<rect x="1023.0" y="123.0" width="3" height="29.0" fill="#00f0f0"/>
<path d="M1027.5 135.0V219.0" stroke="#00f0f0" stroke-width="1"/>
<rect x="1026.0" y="143.0" width="3" height="19.0" fill="#00f0f0"/>
<path d="M1030.5 135.0V183.5" stroke="#00f0f0" stroke-width="1"/>
<rect x="1029.0" y="156.0" width="3" height="26.0" fill="#00f0f0"/>
<path d="M1033.5 150.2V153.0M1033.5 186.0V187.8" stroke="#ff3c3c" stroke-width="1"/>
<rect x="1032.0" y="153.0" width="3" height="33.0" fill="#ff3c3c"/>
<rect x="1033.0" y="154.0" width="1" height="31.0" fill="#000"/>
<path d="M1036.5 159.8V170.0" stroke="#00f0f0" stroke-width="1"/>
<rect x="1035.0" y="162.0" width="3" height="6.0" fill="#00f0f0"/>
<path d="M1039.5 161.0V166.0M1039.5 178.0V179.7" stroke="#ff3c3c" stroke-width="1"/>
<rect x="1038.0" y="166.0" width="3" height="12.0" fill="#ff3c3c"/>
<rect x="1039.0" y="167.0" width="1" height="10.0" fill="#000"/>
<polyline fill="none" stroke="#fff" stroke-width="1.15" points="58.5,221.1 61.5,225.9 64.5,231.3 67.5,239.2 70.5,246.4 73.5,252.1 76.5,256.6 79.5,261.6 82.5,267.4 85.5,272.9 88.5,275.8 91.5,280.8 94.5,283.4 97.5,283.7 100.5,282.9 103.5,281.6 106.5,280.7 109.5,277.6 112.5,274.4 115.5,270.0 118.5,267.0 121.5,261.7 124.5,260.0 127.5,257.1 130.5,256.2 133.5,258.7 136.5,262.0 139.5,270.0 142.5,278.8 145.5,290.7 148.5,300.4 151.5,314.5 154.5,324.3 157.5,335.0 160.5,345.9 163.5,353.3 166.5,359.9 169.5,365.1 172.5,371.3 175.5,378.1 178.5,384.4 181.5,388.4 184.5,392.7 187.5,395.8 190.5,398.2 193.5,403.0 196.5,406.9 199.5,407.0 202.5,404.4 205.5,399.6 208.5,395.4 211.5,389.8 214.5,386.9 217.5,381.9 220.5,377.2 223.5,372.5 226.5,370.1 229.5,369.4 232.5,369.8 235.5,371.5 238.5,375.7 241.5,380.2 244.5,381.1 247.5,386.4 250.5,390.1 253.5,393.0 256.5,393.9 259.5,394.9 262.5,393.4 265.5,388.2 268.5,380.8 271.5,374.0 274.5,367.3 277.5,358.7 280.5,350.1 283.5,339.7 286.5,330.4 289.5,324.0 292.5,318.5 295.5,316.4 298.5,313.7 301.5,309.6 304.5,310.0 307.5,310.5 310.5,313.7 313.5,316.9 316.5,318.8 319.5,319.0 322.5,320.5 325.5,320.0 328.5,321.5 331.5,322.7 334.5,322.7 337.5,322.8 340.5,321.7 343.5,322.7 346.5,323.2 349.5,322.3 352.5,322.0 355.5,323.0 358.5,321.6 361.5,322.0 364.5,324.2 367.5,328.9 370.5,335.3 373.5,340.1 376.5,347.1 379.5,353.2 382.5,357.5 385.5,361.4 388.5,367.7 391.5,372.2 394.5,375.1 397.5,375.3 400.5,374.2 403.5,374.2 406.5,374.4 409.5,374.5 412.5,374.0 415.5,373.9 418.5,372.0 421.5,371.0 424.5,368.5 427.5,365.8 430.5,362.6 433.5,361.1 436.5,358.8 439.5,358.1 442.5,358.7 445.5,359.1 448.5,360.1 451.5,360.5 454.5,361.9 457.5,363.8 460.5,365.9 463.5,366.3 466.5,366.7 469.5,367.7 472.5,368.9 475.5,370.2 478.5,370.3 481.5,368.5 484.5,366.7 487.5,364.6 490.5,361.8 493.5,358.6 496.5,356.0 499.5,352.9 502.5,347.0 505.5,340.3 508.5,336.7 511.5,334.9 514.5,333.0 517.5,332.5 520.5,331.0 523.5,330.7 526.5,330.5 529.5,327.5 532.5,325.3 535.5,323.1 538.5,319.6 541.5,316.9 544.5,313.1 547.5,307.9 550.5,306.1 553.5,304.5 556.5,302.0 559.5,301.6 562.5,303.7 565.5,305.9 568.5,308.0 571.5,309.8 574.5,312.7 577.5,316.5 580.5,317.5 583.5,318.4 586.5,319.3 589.5,318.7 592.5,318.0 595.5,317.8 598.5,317.2 601.5,314.4 604.5,311.9 607.5,307.3 610.5,303.2 613.5,298.9 616.5,293.6 619.5,288.9 622.5,285.1 625.5,278.5 628.5,271.7 631.5,266.6 634.5,261.6 637.5,259.9 640.5,259.5 643.5,258.0 646.5,259.0 649.5,263.2 652.5,275.3 655.5,290.1 658.5,307.2 661.5,318.7 664.5,330.1 667.5,338.0 670.5,345.3 673.5,354.8 676.5,362.4 679.5,367.2 682.5,360.8 685.5,354.5 688.5,344.4 691.5,341.6 694.5,338.4 697.5,337.2 700.5,335.5 703.5,333.8 706.5,332.8 709.5,332.2 712.5,334.1 715.5,335.6 718.5,336.2 721.5,336.0 724.5,334.3 727.5,334.5 730.5,334.4 733.5,333.6 736.5,333.0 739.5,331.4 742.5,329.1 745.5,327.5 748.5,327.4 751.5,327.1 754.5,328.1 757.5,326.5 760.5,326.3 763.5,325.3 766.5,323.2 769.5,322.6 772.5,320.0 775.5,317.0 778.5,314.8 781.5,311.8 784.5,310.2 787.5,310.7 790.5,309.1 793.5,307.4 796.5,306.2 799.5,306.0 802.5,308.0 805.5,309.3 808.5,309.7 811.5,310.6 814.5,309.7 817.5,305.6 820.5,302.8 823.5,298.9 826.5,295.7 829.5,291.1 832.5,287.6 835.5,285.3 838.5,283.3 841.5,283.7 844.5,283.6 847.5,285.6 850.5,287.1 853.5,290.5 856.5,293.7 859.5,297.6 862.5,298.5 865.5,296.1 868.5,294.6 871.5,291.1 874.5,288.1 877.5,286.0 880.5,284.6 883.5,282.9 886.5,281.2 889.5,280.6 892.5,280.6 895.5,283.5 898.5,285.5 901.5,287.9 904.5,290.5 907.5,291.8 910.5,291.6 913.5,291.0 916.5,289.7 919.5,287.9 922.5,286.5 925.5,285.2 928.5,284.6 931.5,283.9 934.5,283.8 937.5,283.4 940.5,282.2 943.5,282.0 946.5,282.5 949.5,282.5 952.5,281.9 955.5,280.3 958.5,279.0 961.5,276.3 964.5,274.1 967.5,271.3 970.5,271.5 973.5,270.7 976.5,269.6 979.5,267.3 982.5,264.1 985.5,261.9 988.5,259.5 991.5,258.6 994.5,258.6 997.5,259.2 1000.5,258.0 1003.5,257.5 1006.5,257.2 1009.5,252.4 1012.5,249.8 1015.5,247.0 1018.5,242.6 1021.5,230.8 1024.5,219.0 1027.5,208.6 1030.5,200.9 1033.5,189.7 1036.5,180.1 1039.5,175.5"/>
<text x="112.5" y="228.7" fill="#ff3c3c" font-size="12" text-anchor="middle" textLength="35" lengthAdjust="spacingAndGlyphs" >81610</text>
<text x="285.5" y="270.7" fill="#ff3c3c" font-size="12" text-anchor="middle" textLength="35" lengthAdjust="spacingAndGlyphs" >79400</text>
<text x="630.5" y="219.7" fill="#ff3c3c" font-size="12" text-anchor="middle" textLength="35" lengthAdjust="spacingAndGlyphs" >82120</text>
<text x="1023.5" y="106.7" fill="#ff3c3c" font-size="12" text-anchor="middle" textLength="35" lengthAdjust="spacingAndGlyphs" >88170</text>
<text x="174.5" y="446" fill="#00f0f0" font-size="12" text-anchor="middle" textLength="35" lengthAdjust="spacingAndGlyphs" >70870</text>
<text x="657.5" y="446.5" fill="#00f0f0" font-size="12" text-anchor="middle" textLength="35" lengthAdjust="spacingAndGlyphs" >70850</text>
<text x="58" y="445" fill="#e6e600" font-size="12" text-anchor="start" textLength="32" lengthAdjust="spacingAndGlyphs" >328天</text>
<rect x="58" y="444.8" width="380" height="3.4" fill="#6a6a6a"/>
<path d="M438.5 440V449.5M1038.5 440V449.5M1038.5 456V465.5M1038.5 654.5V665" stroke="#8a8a8a" stroke-width="1"/>
<path d="M1072 166.7H1092M1082 279.5H1092" stroke="#e6e600" stroke-width="1.3"/>
<text x="62.5" y="462.3" fill="#e6e600" font-size="12" text-anchor="start" textLength="18" lengthAdjust="spacingAndGlyphs" >CJL</text>
<path d="M82.5 456.5L86.5 461L90.5 456.5" fill="none" stroke="#e6e600" stroke-width="1.4"/>
<text x="100" y="462.3" fill="#fff" font-size="12" text-anchor="start" textLength="92.5" lengthAdjust="spacingAndGlyphs" >成交量 55298.00</text>
<text x="201.5" y="462.3" fill="#fff" font-size="12" text-anchor="start" textLength="99" lengthAdjust="spacingAndGlyphs" >持仓量 215629.00</text>
<text x="62.5" y="478.6" fill="#e6e600" font-size="12" text-anchor="start" textLength="58" lengthAdjust="spacingAndGlyphs" >股朋指标网</text>
<path d="M125 472.5L129 477L133 472.5" fill="none" stroke="#e6e600" stroke-width="1.4"/>
<text x="142.8" y="478.6" fill="#fff" font-size="12" text-anchor="start" textLength="91" lengthAdjust="spacingAndGlyphs" >ZBGS324 189.00</text>
<text x="243.3" y="478.6" fill="#fff" font-size="12" text-anchor="start" textLength="78" lengthAdjust="spacingAndGlyphs" >ZBGS337 1.00</text>
<text x="330.4" y="478.6" fill="#fff" font-size="12" text-anchor="start" textLength="78" lengthAdjust="spacingAndGlyphs" >ZBGS340 1.00</text>
<text x="417.5" y="478.6" fill="#fff" font-size="12" text-anchor="start" textLength="105.5" lengthAdjust="spacingAndGlyphs" >ZBGS373 88170.00</text>
<text x="532" y="478.6" fill="#e6e600" font-size="12" text-anchor="start" textLength="106" lengthAdjust="spacingAndGlyphs" >ZBGS374 75900.00</text>
<path d="M58 498.6H1039" stroke="#f0f0f0" stroke-width="1.3"/>
<g fill="none" stroke-width="1.2"><rect x="172.6" y="615" width="66" height="24" stroke="#9a9a9a"/><rect x="238.6" y="612.8" width="189" height="26.2" stroke="#9a9a9a"/><rect x="427.6" y="612.8" width="123" height="24.4" stroke="#9a9a9a"/><rect x="220.4" y="615.8" width="255.4" height="21.2" stroke="#ff8c1a"/></g>
<path d="M57.6 547.7L90.9 595.4" stroke="#00e600" stroke-width="1.25" stroke-dasharray="3.2 4.6" fill="none"/>
<path d="M90.9 595.4L113.2 558.6" stroke="#f0f000" stroke-width="1.25" stroke-dasharray="3.2 4.6" fill="none"/>
<path d="M113.2 558.6L175.9 658.6" stroke="#00e600" stroke-width="1.25" stroke-dasharray="3.2 4.6" fill="none"/>
<path d="M175.9 658.6L224.4 615.8" stroke="#f0f000" stroke-width="1.25" stroke-dasharray="3.2 4.6" fill="none"/>
<path d="M224.4 615.8L242 653" stroke="#00e600" stroke-width="1.25" stroke-dasharray="3.2 4.6" fill="none"/>
<path d="M242 653L287 580.4" stroke="#f0f000" stroke-width="1.25" stroke-dasharray="3.2 4.6" fill="none"/>
<path d="M287 580.4L373.6 638.2" stroke="#00e600" stroke-width="1.25" stroke-dasharray="3.2 4.6" fill="none"/>
<path d="M373.6 638.2L428 615" stroke="#f0f000" stroke-width="1.25" stroke-dasharray="3.2 4.6" fill="none"/>
<path d="M428 615L475.8 636.3" stroke="#00e600" stroke-width="1.25" stroke-dasharray="3.2 4.6" fill="none"/>
<path d="M475.8 636.3L550.2 585.3" stroke="#f0f000" stroke-width="1.25" stroke-dasharray="3.2 4.6" fill="none"/>
<path d="M550.2 585.3L571 609" stroke="#00e600" stroke-width="1.25" stroke-dasharray="3.2 4.6" fill="none"/>
<path d="M571 609L631.7 554.6" stroke="#f0f000" stroke-width="1.25" stroke-dasharray="3.2 4.6" fill="none"/>
<path d="M631.7 554.6L658.7 659.5" stroke="#00e600" stroke-width="1.25" stroke-dasharray="3.2 4.6" fill="none"/>
<path d="M658.7 659.5L1024 498.6" stroke="#f0f000" stroke-width="1.25" stroke-dasharray="3.2 4.6" fill="none"/>
<path d="M57.0 545.0h3v1.8h-3zM60.0 545.0h3v4.9h-3zM63.0 548.2h3v4.9h-3zM66.0 551.3h3v4.9h-3zM69.0 554.4h3v4.9h-3zM72.0 557.5h3v4.9h-3zM75.0 560.6h3v4.9h-3zM78.0 563.8h3v4.1h-3zM81.0 566.1h3v3.8h-3zM84.0 568.1h3v3.8h-3zM87.0 570.2h3v3.8h-3zM90.0 572.2h3v3.8h-3zM93.0 574.2h3v3.8h-3zM96.0 576.3h3v3.8h-3zM132.0 575.1h3v2.5h-3zM135.0 575.9h3v2.5h-3zM138.0 576.6h3v2.5h-3zM141.0 577.3h3v2.5h-3zM144.0 578.1h3v5.7h-3zM147.0 582.0h3v5.8h-3zM150.0 585.9h3v5.8h-3zM153.0 589.9h3v5.8h-3zM156.0 593.9h3v5.8h-3zM159.0 597.9h3v5.3h-3zM162.0 601.4h3v4.8h-3zM165.0 604.4h3v4.8h-3zM168.0 607.5h3v4.8h-3zM171.0 610.5h3v4.8h-3zM174.0 613.5h3v6.2h-3zM177.0 617.9h3v6.3h-3zM180.0 622.4h3v6.3h-3zM183.0 626.9h3v5.5h-3zM186.0 630.7h3v4.1h-3zM189.0 632.9h3v4.1h-3zM192.0 635.2h3v4.1h-3zM195.0 637.4h3v2.6h-3zM234.0 630.7h3v2.3h-3zM237.0 631.2h3v2.3h-3zM240.0 631.8h3v2.3h-3zM243.0 632.3h3v2.3h-3zM246.0 632.8h3v2.4h-3zM249.0 633.4h3v2.4h-3zM252.0 634.0h3v2.4h-3zM255.0 634.7h3v2.4h-3zM321.0 600.6h3v2.2h-3zM324.0 600.9h3v2.3h-3zM327.0 601.4h3v2.3h-3zM330.0 601.9h3v2.1h-3zM333.0 602.2h3v2.0h-3zM336.0 602.4h3v2.0h-3zM339.0 602.6h3v2.0h-3zM342.0 602.8h3v2.0h-3zM357.0 602.8h3v2.0h-3zM360.0 603.0h3v2.4h-3zM363.0 603.6h3v2.4h-3zM366.0 604.1h3v2.4h-3zM369.0 604.7h3v4.2h-3zM372.0 607.1h3v4.6h-3zM375.0 609.9h3v4.6h-3zM378.0 612.6h3v4.3h-3zM381.0 615.1h3v3.3h-3zM384.0 616.6h3v3.3h-3zM387.0 618.1h3v3.3h-3zM390.0 619.6h3v3.3h-3zM393.0 621.1h3v3.3h-3zM396.0 622.6h3v2.9h-3zM399.0 623.7h3v2.7h-3zM402.0 624.7h3v2.7h-3zM405.0 625.6h3v2.7h-3zM408.0 626.5h3v2.7h-3zM444.0 623.9h3v1.9h-3zM447.0 624.0h3v2.0h-3zM450.0 624.2h3v2.0h-3zM453.0 624.4h3v2.0h-3zM456.0 624.6h3v2.0h-3zM459.0 624.9h3v2.0h-3zM462.0 625.1h3v2.0h-3zM465.0 625.3h3v2.0h-3zM468.0 625.5h3v2.0h-3zM471.0 625.6h3v2.0h-3zM474.0 625.8h3v2.0h-3zM477.0 625.8h3v2.0h-3zM561.0 597.8h3v1.8h-3zM564.0 597.8h3v1.8h-3zM567.0 597.8h3v1.8h-3zM570.0 597.8h3v1.8h-3zM573.0 597.8h3v1.8h-3zM576.0 597.8h3v2.2h-3zM579.0 598.2h3v2.2h-3zM582.0 598.6h3v2.2h-3zM585.0 599.0h3v2.2h-3zM651.0 577.2h3v3.2h-3zM654.0 578.6h3v7.6h-3zM657.0 584.4h3v7.6h-3zM660.0 590.2h3v6.7h-3zM663.0 595.1h3v5.7h-3zM666.0 599.0h3v5.7h-3zM669.0 602.9h3v4.3h-3zM672.0 605.5h3v3.7h-3zM675.0 607.4h3v3.7h-3zM678.0 609.3h3v3.7h-3zM681.0 611.2h3v2.3h-3zM684.0 611.8h3v2.3h-3zM837.0 587.6h3v2.6h-3zM840.0 587.6h3v2.0h-3zM843.0 587.8h3v2.0h-3zM846.0 588.0h3v2.0h-3zM849.0 588.2h3v2.0h-3zM852.0 588.4h3v2.0h-3zM855.0 588.6h3v2.0h-3zM858.0 588.8h3v2.0h-3zM861.0 588.6h3v2.2h-3zM888.0 585.0h3v1.8h-3zM891.0 585.0h3v2.0h-3zM894.0 585.2h3v2.0h-3zM897.0 585.5h3v2.0h-3zM900.0 585.7h3v2.0h-3zM903.0 586.0h3v2.0h-3zM906.0 586.2h3v2.0h-3z" fill="#00f000"/>
<path d="M99.0 578.3h3v3.7h-3zM102.0 579.4h3v2.6h-3zM105.0 578.6h3v2.6h-3zM108.0 577.8h3v2.6h-3zM111.0 577.0h3v2.6h-3zM114.0 576.4h3v2.4h-3zM117.0 575.7h3v2.4h-3zM120.0 575.1h3v2.4h-3zM123.0 574.5h3v2.4h-3zM126.0 574.4h3v1.9h-3zM129.0 574.4h3v2.5h-3zM198.0 638.2h3v1.9h-3zM201.0 638.3h3v1.9h-3zM204.0 638.4h3v1.9h-3zM207.0 638.5h3v1.9h-3zM210.0 637.6h3v2.7h-3zM213.0 636.7h3v2.7h-3zM216.0 635.8h3v2.7h-3zM219.0 634.9h3v2.8h-3zM222.0 633.8h3v2.8h-3zM225.0 632.8h3v2.8h-3zM228.0 631.8h3v2.8h-3zM231.0 630.7h3v2.8h-3zM258.0 634.6h3v2.5h-3zM261.0 633.6h3v2.8h-3zM264.0 632.5h3v2.8h-3zM267.0 631.5h3v2.8h-3zM270.0 630.5h3v2.8h-3zM273.0 628.8h3v3.5h-3zM276.0 625.8h3v4.8h-3zM279.0 622.9h3v4.8h-3zM282.0 619.9h3v4.8h-3zM285.0 616.5h3v5.2h-3zM288.0 613.0h3v5.3h-3zM291.0 609.5h3v5.3h-3zM294.0 608.1h3v3.2h-3zM297.0 606.7h3v3.2h-3zM300.0 605.2h3v3.2h-3zM303.0 603.8h3v3.2h-3zM306.0 602.8h3v2.8h-3zM309.0 602.3h3v2.4h-3zM312.0 601.7h3v2.4h-3zM315.0 601.1h3v2.4h-3zM318.0 600.6h3v2.4h-3zM345.0 602.9h3v1.9h-3zM348.0 603.0h3v1.9h-3zM351.0 602.9h3v1.9h-3zM354.0 602.8h3v1.9h-3zM411.0 627.4h3v2.4h-3zM414.0 627.8h3v2.1h-3zM417.0 627.5h3v2.1h-3zM420.0 627.2h3v2.1h-3zM423.0 626.5h3v2.5h-3zM426.0 625.7h3v2.7h-3zM429.0 624.8h3v2.7h-3zM432.0 623.9h3v2.7h-3zM435.0 623.9h3v1.8h-3zM438.0 623.9h3v1.8h-3zM441.0 623.9h3v1.8h-3zM480.0 625.3h3v2.3h-3zM483.0 624.7h3v2.3h-3zM486.0 624.2h3v2.3h-3zM489.0 623.6h3v2.3h-3zM492.0 623.1h3v2.3h-3zM495.0 621.6h3v3.3h-3zM498.0 620.1h3v3.3h-3zM501.0 618.6h3v3.3h-3zM504.0 617.1h3v3.3h-3zM507.0 615.6h3v3.3h-3zM510.0 614.3h3v3.0h-3zM513.0 613.3h3v2.8h-3zM516.0 612.3h3v2.8h-3zM519.0 611.3h3v2.8h-3zM522.0 610.3h3v2.8h-3zM525.0 609.3h3v2.9h-3zM528.0 607.9h3v3.1h-3zM531.0 606.6h3v3.1h-3zM534.0 605.2h3v3.1h-3zM537.0 603.9h3v3.1h-3zM540.0 602.5h3v3.1h-3zM543.0 601.6h3v2.8h-3zM546.0 600.8h3v2.6h-3zM549.0 600.0h3v2.6h-3zM552.0 599.2h3v2.6h-3zM555.0 598.4h3v2.6h-3zM558.0 597.8h3v2.4h-3zM588.0 599.4h3v1.8h-3zM591.0 599.4h3v1.8h-3zM594.0 599.4h3v1.8h-3zM597.0 599.4h3v1.8h-3zM600.0 598.7h3v2.5h-3zM603.0 597.5h3v3.0h-3zM606.0 596.3h3v3.0h-3zM609.0 595.1h3v3.0h-3zM612.0 593.9h3v3.0h-3zM615.0 591.9h3v3.9h-3zM618.0 589.8h3v3.9h-3zM621.0 587.8h3v3.9h-3zM624.0 585.7h3v3.9h-3zM627.0 583.8h3v3.8h-3zM630.0 581.9h3v3.7h-3zM633.0 580.0h3v3.7h-3zM636.0 578.1h3v3.7h-3zM639.0 577.7h3v2.1h-3zM642.0 577.6h3v2.0h-3zM645.0 577.4h3v2.0h-3zM648.0 577.2h3v2.0h-3zM687.0 612.3h3v2.2h-3zM690.0 612.6h3v1.9h-3zM693.0 612.5h3v1.9h-3zM696.0 612.4h3v1.9h-3zM699.0 612.4h3v1.9h-3zM702.0 612.3h3v1.9h-3zM705.0 612.2h3v1.9h-3zM708.0 612.1h3v1.9h-3zM711.0 611.4h3v2.5h-3zM714.0 610.6h3v2.6h-3zM717.0 609.8h3v2.6h-3zM720.0 609.1h3v2.6h-3zM723.0 608.9h3v2.0h-3zM726.0 608.7h3v2.0h-3zM729.0 608.5h3v2.0h-3zM732.0 608.3h3v2.0h-3zM735.0 608.1h3v2.0h-3zM738.0 608.0h3v2.0h-3zM741.0 607.8h3v2.0h-3zM744.0 607.4h3v2.2h-3zM747.0 606.9h3v2.3h-3zM750.0 606.4h3v2.3h-3zM753.0 605.9h3v2.3h-3zM756.0 605.5h3v2.3h-3zM759.0 605.0h3v2.3h-3zM762.0 604.5h3v2.3h-3zM765.0 603.9h3v2.4h-3zM768.0 603.0h3v2.7h-3zM771.0 602.1h3v2.7h-3zM774.0 601.2h3v2.7h-3zM777.0 600.3h3v2.7h-3zM780.0 599.4h3v2.7h-3zM783.0 599.0h3v2.3h-3zM786.0 598.7h3v2.0h-3zM789.0 598.5h3v2.0h-3zM792.0 598.3h3v2.0h-3zM795.0 598.0h3v2.0h-3zM798.0 597.8h3v2.0h-3zM801.0 597.6h3v2.0h-3zM804.0 597.2h3v2.2h-3zM807.0 596.4h3v2.6h-3zM810.0 595.7h3v2.6h-3zM813.0 594.9h3v2.6h-3zM816.0 594.1h3v2.6h-3zM819.0 593.4h3v2.6h-3zM822.0 592.4h3v2.7h-3zM825.0 591.4h3v2.8h-3zM828.0 590.4h3v2.8h-3zM831.0 589.4h3v2.8h-3zM834.0 588.4h3v2.8h-3zM864.0 587.9h3v2.5h-3zM867.0 587.1h3v2.5h-3zM870.0 586.4h3v2.5h-3zM873.0 585.7h3v2.5h-3zM876.0 585.5h3v2.0h-3zM879.0 585.3h3v2.0h-3zM882.0 585.2h3v2.0h-3zM885.0 585.0h3v2.0h-3zM909.0 586.4h3v1.9h-3zM912.0 586.1h3v2.1h-3zM915.0 585.8h3v2.1h-3zM918.0 585.4h3v2.1h-3zM921.0 585.1h3v2.1h-3zM924.0 584.8h3v2.1h-3zM927.0 584.5h3v2.1h-3zM930.0 584.1h3v2.1h-3zM933.0 583.8h3v2.1h-3zM936.0 583.5h3v2.1h-3zM939.0 583.2h3v2.1h-3zM942.0 582.9h3v2.1h-3zM945.0 582.5h3v2.1h-3zM948.0 582.2h3v2.1h-3zM951.0 581.9h3v2.1h-3zM954.0 581.6h3v2.1h-3zM957.0 581.2h3v2.1h-3zM960.0 580.7h3v2.4h-3zM963.0 580.0h3v2.5h-3zM966.0 579.3h3v2.5h-3zM969.0 578.6h3v2.5h-3zM972.0 577.9h3v2.5h-3zM975.0 577.2h3v2.5h-3zM978.0 576.4h3v2.5h-3zM981.0 575.7h3v2.5h-3zM984.0 575.0h3v2.5h-3zM987.0 574.3h3v2.5h-3zM990.0 573.6h3v2.5h-3zM993.0 572.8h3v2.6h-3zM996.0 571.9h3v2.7h-3zM999.0 571.0h3v2.7h-3zM1002.0 570.1h3v2.7h-3zM1005.0 569.2h3v2.7h-3zM1008.0 568.3h3v2.7h-3zM1011.0 567.4h3v2.7h-3zM1014.0 566.2h3v3.0h-3zM1017.0 563.2h3v4.8h-3zM1020.0 560.2h3v4.8h-3zM1023.0 557.2h3v4.8h-3zM1026.0 553.5h3v5.5h-3zM1029.0 549.6h3v5.7h-3zM1032.0 546.2h3v5.3h-3zM1035.0 543.7h3v4.2h-3zM1038.0 541.3h3v4.2h-3z" fill="#ff1010"/>
<path d="M58 612.4H1039" stroke="#e6e600" stroke-width="1.3"/>
<path d="M959.7 512.5H1035" stroke="#ff1010" stroke-width="1.2"/>
<path d="M959.7 527H1035" stroke="#00f000" stroke-width="1.2"/>
<path d="M959.7 536.5H1035" stroke="#8a8a8a" stroke-width="1.2"/>
<path d="M959.7 541.4H1035" stroke="#8a8a8a" stroke-width="1.2"/>
<path d="M959.7 555.5H1035" stroke="#00f000" stroke-width="1.2"/>
<path d="M959.7 570H1035" stroke="#8a8a8a" stroke-width="1.2"/>
<path d="M959.7 574.7H1035" stroke="#8a8a8a" stroke-width="1.2"/>
<path d="M959.7 584.5H1035" stroke="#00f000" stroke-width="1.2"/>
<path d="M959.7 598.5H1035" stroke="#ff1010" stroke-width="1.2"/>
<text x="925.4" y="498.3" fill="#00f000" font-size="12" text-anchor="start" textLength="52" lengthAdjust="spacingAndGlyphs" >88170.00</text>
<text x="1022.7" y="498.3" fill="#00f000" font-size="12" text-anchor="start" textLength="30.5" lengthAdjust="spacingAndGlyphs" >1.000</text>
<text x="925.4" y="509.90000000000003" fill="#ff1010" font-size="12" text-anchor="start" textLength="52" lengthAdjust="spacingAndGlyphs" >86636.25</text>
<text x="1005" y="509.90000000000003" fill="#ff00d0" font-size="12" text-anchor="start" textLength="66.4" lengthAdjust="spacingAndGlyphs" >0.875--- 7/8</text>
<text x="925.4" y="524.3" fill="#ff00d0" font-size="12" text-anchor="start" textLength="52" lengthAdjust="spacingAndGlyphs" >85102.50</text>
<text x="1008.4" y="524.3" fill="#00f000" font-size="12" text-anchor="start" textLength="59" lengthAdjust="spacingAndGlyphs" >0.75--- 3/4</text>
<text x="925.4" y="533.5999999999999" fill="#ff1010" font-size="12" text-anchor="start" textLength="52" lengthAdjust="spacingAndGlyphs" >84084.09</text>
<text x="1005" y="533.5999999999999" fill="#8a8a8a" font-size="12" text-anchor="start" textLength="64" lengthAdjust="spacingAndGlyphs" >0.666--- 2/3</text>
<text x="925.4" y="539.3" fill="#ff1010" font-size="12" text-anchor="start" textLength="52" lengthAdjust="spacingAndGlyphs" >83568.75</text>
<text x="1005" y="539.3" fill="#8a8a8a" font-size="12" text-anchor="start" textLength="66.4" lengthAdjust="spacingAndGlyphs" >0.625--- 5/8</text>
<text x="925.4" y="553.0999999999999" fill="#00f000" font-size="12" text-anchor="start" textLength="52" lengthAdjust="spacingAndGlyphs" >82035.00</text>
<text x="1008.4" y="553.0999999999999" fill="#ff00d0" font-size="12" text-anchor="start" textLength="59" lengthAdjust="spacingAndGlyphs" >0.50--- 1/2</text>
<text x="925.4" y="567.3" fill="#ff00d0" font-size="12" text-anchor="start" textLength="52" lengthAdjust="spacingAndGlyphs" >80501.25</text>
<text x="1005" y="567.3" fill="#8a8a8a" font-size="12" text-anchor="start" textLength="64" lengthAdjust="spacingAndGlyphs" >0.375--- 3/8</text>
<text x="925.4" y="571.9" fill="#ff1010" font-size="12" text-anchor="start" textLength="52" lengthAdjust="spacingAndGlyphs" >79985.91</text>
<text x="1005" y="571.9" fill="#8a8a8a" font-size="12" text-anchor="start" textLength="65" lengthAdjust="spacingAndGlyphs" >0.333--- 1/3</text>
<text x="925.4" y="581.8" fill="#f0f000" font-size="12" text-anchor="start" textLength="52" lengthAdjust="spacingAndGlyphs" >78967.50</text>
<text x="1007.3" y="581.8" fill="#00f000" font-size="12" text-anchor="start" textLength="62" lengthAdjust="spacingAndGlyphs" >0.25 --- 1/4</text>
<text x="925.4" y="595.6999999999999" fill="#ff1010" font-size="12" text-anchor="start" textLength="52" lengthAdjust="spacingAndGlyphs" >77433.75</text>
<text x="1002.8" y="595.6999999999999" fill="#ff00d0" font-size="12" text-anchor="start" textLength="70" lengthAdjust="spacingAndGlyphs" >0.125 --- 1/8</text>
<text x="925.4" y="610.0999999999999" fill="#00f000" font-size="12" text-anchor="start" textLength="52" lengthAdjust="spacingAndGlyphs" >75900.00</text>
<text x="1025" y="610.0999999999999" fill="#00e0e0" font-size="12" text-anchor="start" textLength="30.5" lengthAdjust="spacingAndGlyphs" >1.000</text>
<text x="766" y="522" fill="#ff8c1a" font-size="12" text-anchor="start" textLength="132" lengthAdjust="spacingAndGlyphs" >大盘走势良好，量能理想</text>
<path d="M1093 90.4H1101M1093 197.6H1101M1093 302.6H1101M1093 346.1H1101M1093 568.8H1101" stroke="#c80000" stroke-width="1.1"/>
<text x="1095.5" y="76" fill="#ff2020" font-size="13" text-anchor="start" font-weight="bold">M</text>
<text x="1095.3" y="106.6" fill="#f0f0f0" font-size="14" text-anchor="start" font-weight="300">卖</text>
<text x="1095.3" y="127.6" fill="#f0f0f0" font-size="14" text-anchor="start" font-weight="300">卖</text>
<text x="1095.3" y="149" fill="#f0f0f0" font-size="14" text-anchor="start" font-weight="300">卖</text>
<text x="1095.3" y="169.8" fill="#f0f0f0" font-size="14" text-anchor="start" font-weight="300">卖</text>
<text x="1095.3" y="191" fill="#f0f0f0" font-size="14" text-anchor="start" font-weight="300">卖</text>
<text x="1095.3" y="212.5" fill="#f0f0f0" font-size="14" text-anchor="start" font-weight="300">买</text>
<text x="1095.3" y="233.7" fill="#f0f0f0" font-size="14" text-anchor="start" font-weight="300">买</text>
<text x="1095.3" y="255" fill="#f0f0f0" font-size="14" text-anchor="start" font-weight="300">买</text>
<text x="1095.3" y="276" fill="#f0f0f0" font-size="14" text-anchor="start" font-weight="300">买</text>
<text x="1095.3" y="296.5" fill="#f0f0f0" font-size="14" text-anchor="start" font-weight="300">买</text>
<text x="1095.3" y="318" fill="#f0f0f0" font-size="14" text-anchor="start" font-weight="300">总</text>
<text x="1095.3" y="339.5" fill="#f0f0f0" font-size="14" text-anchor="start" font-weight="300">总</text>
<text x="1095.3" y="363.8" fill="#f0f0f0" font-size="14" text-anchor="start" font-weight="300">最</text>
<text x="1095.3" y="384.5" fill="#f0f0f0" font-size="14" text-anchor="start" font-weight="300">现</text>
<text x="1095.3" y="405" fill="#f0f0f0" font-size="14" text-anchor="start" font-weight="300">总</text>
<text x="1095.3" y="426" fill="#f0f0f0" font-size="14" text-anchor="start" font-weight="300">持</text>
<text x="1095.3" y="448.5" fill="#f0f0f0" font-size="14" text-anchor="start" font-weight="300">日</text>
<text x="1095.3" y="471" fill="#f0f0f0" font-size="14" text-anchor="start" font-weight="300">外</text>
<text x="1095.3" y="494.7" fill="#f0f0f0" font-size="14" text-anchor="start" font-weight="300">比</text>
<text x="1095.3" y="516.6" fill="#f0f0f0" font-size="14" text-anchor="start" font-weight="300">内</text>
<text x="1095.3" y="537.7" fill="#f0f0f0" font-size="14" text-anchor="start" font-weight="300">比</text>
<text x="1095.3" y="558.7" fill="#f0f0f0" font-size="14" text-anchor="start" font-weight="300">杠</text>
<text x="1095.3" y="585.8" fill="#8a8a8a" font-size="14" text-anchor="start" font-weight="300">时</text>
<text x="1096" y="606.5" fill="#8a8a8a" font-size="13" text-anchor="start" >0</text>
<text x="1096" y="630.5" fill="#8a8a8a" font-size="13" text-anchor="start" >0</text>
<text x="1089" y="654" fill="#e6e600" font-size="12" text-anchor="start" >&gt;</text>
<text x="1096" y="654" fill="#8a8a8a" font-size="13" text-anchor="start" >0</text></svg></body></html>
